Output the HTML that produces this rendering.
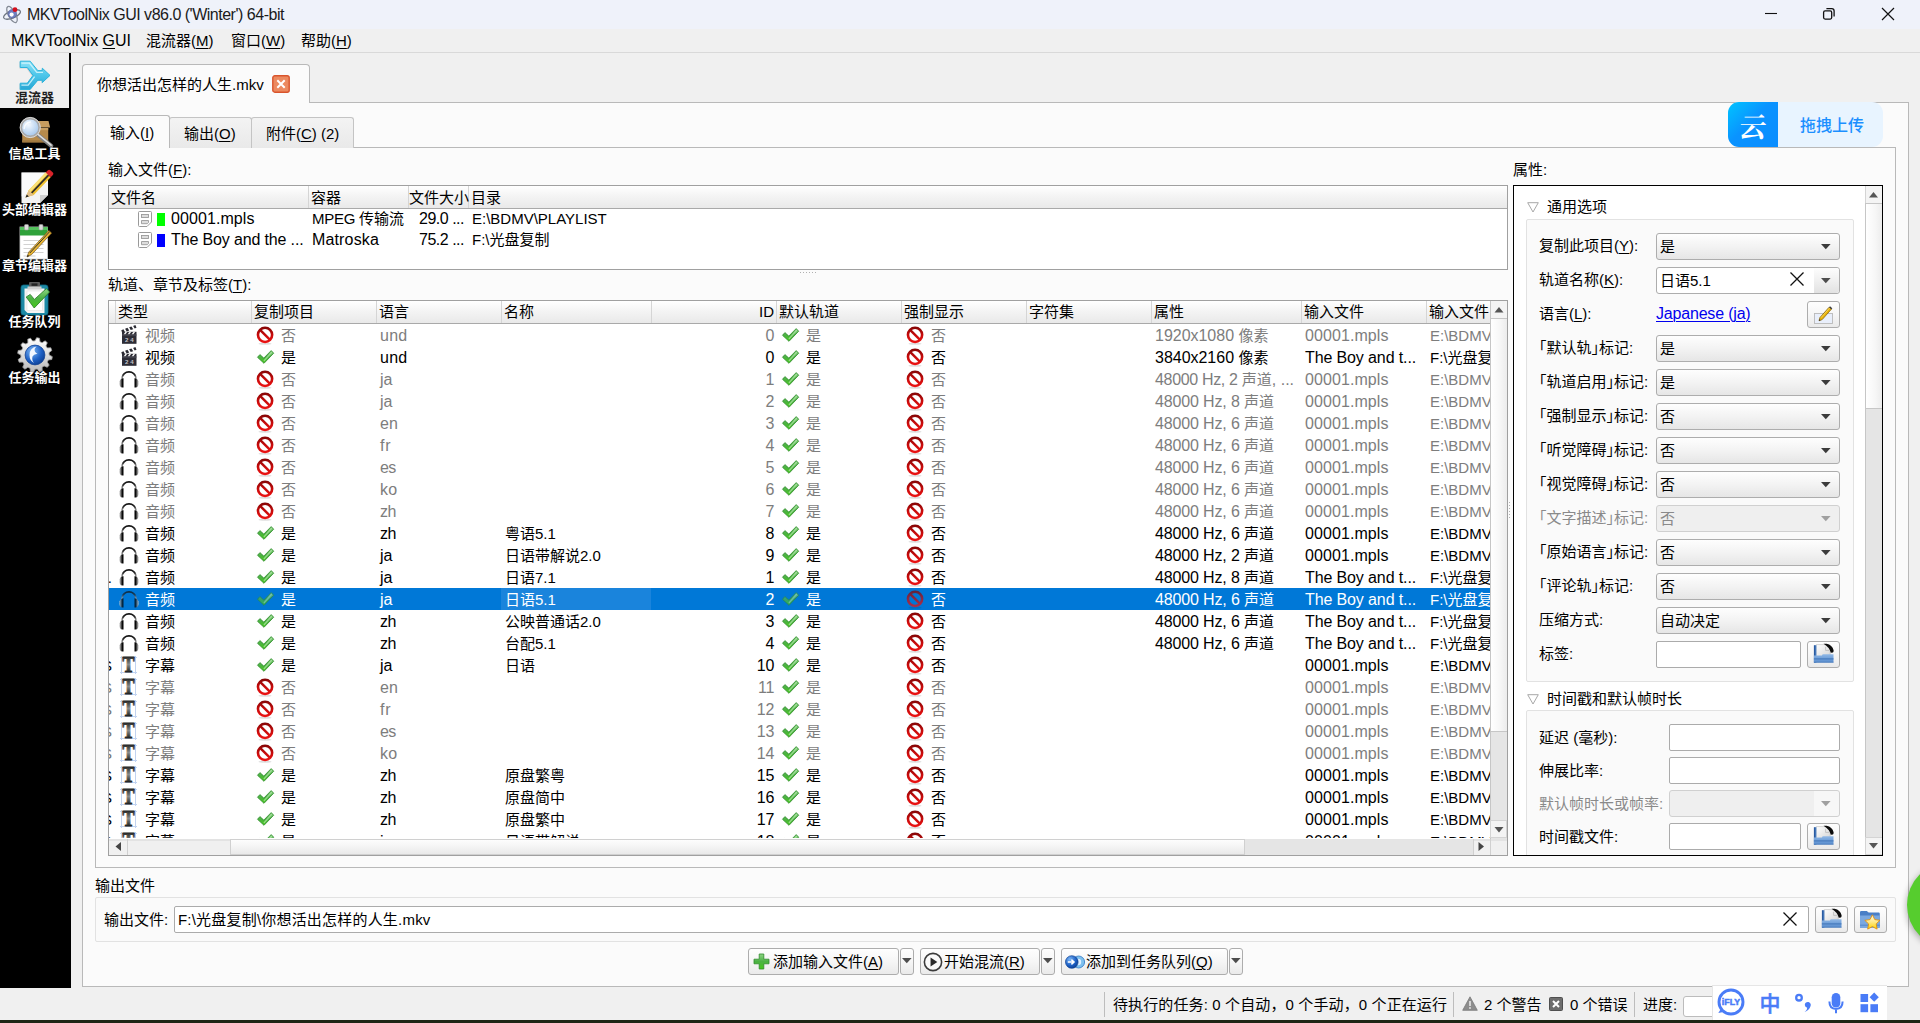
<!DOCTYPE html>
<html lang="zh-CN"><head><meta charset="utf-8"><title>MKVToolNix GUI</title>
<style>
*{box-sizing:border-box;margin:0;padding:0}
html,body{width:1920px;height:1023px;overflow:hidden}
body{position:relative;background:#f0f0f0;font:15px/20px "Liberation Sans","Noto Sans CJK SC",sans-serif;color:#000;-webkit-font-smoothing:antialiased}
.a{position:absolute}
.t{position:absolute;white-space:nowrap;height:20px;line-height:20px}
u{text-decoration:underline;text-underline-offset:2px;text-decoration-thickness:1px}
svg{position:absolute;overflow:visible}
#titlebar{left:0;top:0;width:1920px;height:29px;background:#eff2fa}
#menubar{left:0;top:29px;width:1920px;height:24px;background:#f0f0f0;border-bottom:1px solid #d9d9d9}
.menu{font-size:15px;letter-spacing:.45px;top:1px}
#side{left:0;top:53px;width:69px;height:935px;background:#000}
#sideline{left:69px;top:53px;width:2px;height:935px;background:#000}
.sitem{left:0;width:69px;height:56px;text-align:center}
.slabel{position:absolute;left:-10px;width:89px;text-align:center;top:36px;font-size:13px;font-weight:bold;color:#fff;line-height:18px;white-space:nowrap}
.pane{background:#fbfbfb;border:1px solid #b9b9b9}
.tab{border:1px solid #c4c4c4;border-bottom:none;border-radius:3px 3px 0 0;background:linear-gradient(#f3f3f3,#e9e9e9)}
.tab.sel{background:#fbfbfb;border-color:#b9b9b9}
.hdr{position:absolute;background:linear-gradient(#ffffff,#f4f4f4 45%,#e9e9e9);border-bottom:1px solid #a9a9a9}
.hsep{position:absolute;top:0;width:1px;height:100%;background:#d5d5d5}
.gray{color:#7d7d7d}
.row{position:absolute;left:0;height:22px;width:100%}
.row.sel{background:#0078d7;color:#fff}
.combo{position:absolute;height:27px;border:1px solid #adadad;border-radius:3px;background:linear-gradient(#fefefe,#f3f3f3 50%,#e6e6e6)}
.combo.dis{border-color:#d0d0d0;background:#efefef;color:#8a8a8a}
.edit{position:absolute;height:27px;border:1px solid #ababab;border-radius:2px;background:#fff}
.btn{position:absolute;border:1px solid #adadad;border-radius:3px;background:linear-gradient(#fefefe,#f6f6f6 50%,#eaeaea)}

.row.sel svg{opacity:.72}

</style></head>
<body>
<svg width="0" height="0" style="position:absolute">
<defs>
<linearGradient id="gGreen" x1="0" y1="0" x2="0" y2="1"><stop offset="0" stop-color="#8ed585"/><stop offset=".5" stop-color="#4cb244"/><stop offset="1" stop-color="#46c81a"/></linearGradient>
<linearGradient id="gRed" gradientUnits="userSpaceOnUse" x1="0" y1="0" x2="0" y2="17"><stop offset="0" stop-color="#7c0505"/><stop offset=".5" stop-color="#c40a0a"/><stop offset="1" stop-color="#ee1414"/></linearGradient>
<linearGradient id="gT" gradientUnits="userSpaceOnUse" x1="0" y1="0" x2="0" y2="13"><stop offset="0" stop-color="#1a1a1a"/><stop offset=".5" stop-color="#8a8a8a"/><stop offset="1" stop-color="#111"/></linearGradient>
<linearGradient id="gCyan" x1="0" y1="0" x2="0" y2="1"><stop offset="0" stop-color="#8fe3f7"/><stop offset=".5" stop-color="#4cc6ea"/><stop offset="1" stop-color="#2aa7d4"/></linearGradient>
<linearGradient id="gBlueTray" x1="0" y1="0" x2="0" y2="1"><stop offset="0" stop-color="#92b9e6"/><stop offset=".5" stop-color="#6f9fd9"/><stop offset="1" stop-color="#5a8dcd"/></linearGradient>
<linearGradient id="gStar" x1="0" y1="0" x2="0" y2="1"><stop offset="0" stop-color="#fffbe0"/><stop offset=".5" stop-color="#ffe98a"/><stop offset="1" stop-color="#ffd400"/></linearGradient>
<linearGradient id="gPage" x1="0" y1="0" x2="1" y2="1"><stop offset="0" stop-color="#ffffff"/><stop offset="1" stop-color="#d6d6d6"/></linearGradient>
<linearGradient id="gBar" x1="0" y1="0" x2="1" y2="0"><stop offset="0" stop-color="#1d4d94"/><stop offset="1" stop-color="#5a8ccc"/></linearGradient>
<linearGradient id="gBand" x1="0" y1="0" x2="0" y2="1"><stop offset="0" stop-color="#111"/><stop offset=".35" stop-color="#262626"/><stop offset=".7" stop-color="#8a8a8a"/><stop offset="1" stop-color="#d0d0d0"/></linearGradient>
<linearGradient id="gHPL" x1="0" y1="0" x2="1" y2="0"><stop offset="0" stop-color="#d8d8d8"/><stop offset=".4" stop-color="#6a6a6a"/><stop offset=".7" stop-color="#0a0a0a"/><stop offset="1" stop-color="#000"/></linearGradient>
<linearGradient id="gHPR" x1="1" y1="0" x2="0" y2="0"><stop offset="0" stop-color="#d8d8d8"/><stop offset=".4" stop-color="#6a6a6a"/><stop offset=".7" stop-color="#0a0a0a"/><stop offset="1" stop-color="#000"/></linearGradient>
<linearGradient id="gHP" x1="0" y1="0" x2="1" y2="0"><stop offset="0" stop-color="#111"/><stop offset=".5" stop-color="#999"/><stop offset="1" stop-color="#222"/></linearGradient>
<radialGradient id="gBall" cx=".35" cy=".3" r=".8"><stop offset="0" stop-color="#7db6f5"/><stop offset=".6" stop-color="#1c5fc4"/><stop offset="1" stop-color="#0b3a8a"/></radialGradient>
<radialGradient id="gLens" cx=".4" cy=".35" r=".7"><stop offset="0" stop-color="#f4f9ff"/><stop offset="1" stop-color="#9fc3ea"/></radialGradient>
<linearGradient id="gGear" x1="0" y1="0" x2="0" y2="1"><stop offset="0" stop-color="#ffffff"/><stop offset="1" stop-color="#b9b9b9"/></linearGradient>

</defs></svg>
<div id="titlebar" class="a"></div>
<svg class="a" style="left:2px;top:4px" width="20" height="20" viewBox="0 0 20 20">
<ellipse cx="10" cy="10.5" rx="9" ry="3.6" fill="none" stroke="#6d7480" stroke-width="1.3" transform="rotate(-22 10 10.5)"/>
<ellipse cx="10" cy="10.5" rx="9" ry="3.6" fill="none" stroke="#858b96" stroke-width="1.3" transform="rotate(62 10 10.5)"/>
<circle cx="10.3" cy="9.8" r="4.3" fill="#6f7fc0"/><circle cx="10.3" cy="9.8" r="4.3" fill="none" stroke="#55609a" stroke-width=".6"/>
<circle cx="9.6" cy="10.6" r="2.1" fill="#fff"/>
<circle cx="13" cy="5.7" r="2.4" fill="#d40f1c"/>
</svg>
<div class="t" style="left:27px;top:5px;font-size:16px;color:#1a1a1a;letter-spacing:-.49px">MKVToolNix GUI v86.0 ('Winter') 64-bit</div>
<svg class="a" style="left:1750px;top:0" width="170" height="29" viewBox="0 0 170 29">
<path d="M15 13.5 h12" stroke="#111" stroke-width="1.1"/>
<path d="M75.1 10.9 h5.1 q1.5 0 1.5 1.5 v5.2 q0 1.5 -1.5 1.5 h-5.1 q-1.5 0 -1.5 -1.5 v-5.2 q0 -1.5 1.5 -1.5 z M76.4 8.6 h5.4 q2.3 0 2.3 2.3 v5.6" fill="none" stroke="#111" stroke-width="1.3"/>
<path d="M132 8 l12 12 M144 8 l-12 12" stroke="#111" stroke-width="1.2"/>
</svg>
<div id="menubar" class="a"></div>
<div class="t menu" style="left:11px;top:31px;font-size:16px;letter-spacing:0">MKVToolNix <u>G</u>UI</div>
<div class="t menu" style="left:146px;top:31px;letter-spacing:0">混流器(<u>M</u>)</div>
<div class="t menu" style="left:231px;top:31px;letter-spacing:0">窗口(<u>W</u>)</div>
<div class="t menu" style="left:301px;top:31px;letter-spacing:0">帮助(<u>H</u>)</div>
<div id="side" class="a"></div><div id="sideline" class="a"></div>
<div class="a" style="left:0;top:53px;width:69px;height:55px;background:#f0f0f0"></div>
<svg class="a" style="left:19px;top:60px" width="33" height="31" viewBox="0 0 33 31">
<path d="M1.2 1.2 H11.2 L18.8 10.6 H23.3 V8.2 L31 15.4 L23.3 22.6 V20.2 H18.8 L11.2 29.4 H1.2 V23.2 H8.3 L14 15.4 L8.3 7.5 H1.2 Z" transform="translate(-.8 .9)" fill="#9a9a9a" opacity=".35"/>
<path d="M1.2 1.2 H11.2 L18.8 10.6 H23.3 V8.2 L31 15.4 L23.3 22.6 V20.2 H18.8 L11.2 29.4 H1.2 V23.2 H8.3 L14 15.4 L8.3 7.5 H1.2 Z" fill="url(#gCyan)" stroke="#2ab4dd" stroke-width="1" stroke-linejoin="round"/>
<path d="M2.4 3.2 H10.4 L17.8 12.400000000000001 H24 M2.4 25.2 H9.2 L15.6 16.6" fill="none" stroke="#d9f7fd" stroke-width="1.3" opacity=".85"/></svg>
<div class="a sitem" style="top:53px"><div class="slabel" style="color:#1f1f1f">混流器</div></div>
<svg class="a" style="left:19px;top:116px" width="36" height="34" viewBox="0 0 36 34">
<path d="M3.2 12 h26.000000000000004 v14.4 h-26 z" fill="#b58a4c"/><path d="M19 5 h10.500000000000002 l1.6 6.500000000000001 h-12.100000000000001 z" fill="#c79d5f"/><path d="M3.2 12 h26 v2.2 h-26 z" fill="#c9a063"/><path d="M3.2 24.2 h26 v2.2 h-26 z" fill="#a27a40"/>
<path d="M18.500000000000004 18.5 l13.8 11.400000000000002" stroke="#808080" stroke-width="4" stroke-linecap="round"/><path d="M18.7 18.1 l13.400000000000002 11.100000000000001" stroke="#dedede" stroke-width="1.5" stroke-linecap="round"/>
<circle cx="11.2" cy="11.5" r="9.2" fill="url(#gLens)" stroke="#a9a9a9" stroke-width="2.2"/><circle cx="11.2" cy="11.5" r="10.100000000000001" fill="none" stroke="#e2e2e2" stroke-width=".9"/><path d="M5.2 12.5 q.5 -5.500000000000001 6 -6.500000000000001" fill="none" stroke="#fff" stroke-width="1.6" opacity=".8" stroke-linecap="round"/></svg>
<div class="a sitem" style="top:109px"><div class="slabel" style="color:#fff">信息工具</div></div>
<svg class="a" style="left:20px;top:169px" width="34" height="35" viewBox="0 0 34 35">
<path d="M1.5 3.5 h26.500000000000004 v22.5 l-8 8 h-18.5 z" fill="#f3f3f3"/><path d="M28 26 h-8 v8 z" fill="#d0d0d0"/><path d="M1.5 3.5 h26.5 v10 l-26.500000000000004 14 z" fill="#fff" opacity=".6"/>
<path d="M5.5 28.5 l3.2 -7.200000000000001 17 -17.8 5 4.8 -17 17.8 z" fill="#f0c12e"/><path d="M8.7 21.3 l17 -17.8 1.700000000000001 1.600000000000001 -17 17.8 z" fill="#fbe27a"/><path d="M10.900000000000002 23.4 l17 -17.8 1.3 1.200000000000001 -17 17.8 z" fill="#2d2d2d"/>
<path d="M25.7 3.5 l2.200000000000001 -2.300000000000001 q1.2 -1 2.5 0 l2.500000000000001 2.400000000000001 q1 1.3 0 2.500000000000001 l-2.200000000000001 2.200000000000001 z" fill="#d8232a"/>
<path d="M5.5 28.5 l3.2 -7.2 5 4.800000000000001 z" fill="#e2c08a"/><path d="M5.5 28.5 l1.3 -3 2 1.9 z" fill="#222"/></svg>
<div class="a sitem" style="top:165px"><div class="slabel" style="color:#fff">头部编辑器</div></div>
<svg class="a" style="left:19px;top:224px" width="34" height="36" viewBox="0 0 34 36">
<rect x="1" y="3" width="27.500000000000004" height="32" fill="#fff" stroke="#cfcfcf" stroke-width=".8"/><rect x="1" y="3" width="27.5" height="8.5" fill="#2fa23a"/><rect x="1" y="3" width="27.5" height="3" fill="#55c25e"/>
<rect x="5.5" y="0.5" width="4" height="5.5" rx="1" fill="#dcdcdc" stroke="#9a9a9a" stroke-width=".6"/><rect x="20" y="0.5" width="4" height="5.5" rx="1" fill="#dcdcdc" stroke="#9a9a9a" stroke-width=".6"/>
<path d="M4.5 16.5 h20 M4.5 20.5 h20 M4.5 24.500000000000004 h20 M4.5 28.500000000000004 h20 M4.5 32 h12" stroke="#d2d2d2" stroke-width="1.2"/>
<path d="M8 33 l1.800000000000001 -5.000000000000001 20 -21.5 2.800000000000001 2.600000000000001 -20 21.5 z" fill="#e9b531" stroke="#77551b" stroke-width=".7"/><path d="M10.8 29 l20 -21.5" stroke="#333" stroke-width="1"/><path d="M8 33 l.8 -2.2 1.3 1.200000000000001 z" fill="#222"/></svg>
<div class="a sitem" style="top:221px"><div class="slabel" style="color:#fff">章节编辑器</div></div>
<svg class="a" style="left:20px;top:281px" width="32" height="35" viewBox="0 0 32 35">
<rect x="1" y="4" width="27" height="30" rx="2.500000000000001" fill="#1d8aa6"/><rect x="1" y="4" width="27" height="30" rx="2.5" fill="none" stroke="#0f6a84" stroke-width=".8"/>
<path d="M4.5 7.5 h20 v24.5 h-17 l-3 -3 z" fill="#f4f4f4"/><path d="M7 10 h15.500000000000002 v19.5 h-15.5 z" fill="#fff" stroke="#e0e0e0" stroke-width=".6"/>
<rect x="9" y="1" width="11" height="6.5" rx="1" fill="#5a5a5a"/><rect x="11.5" y="2.4" width="6" height="2.4" fill="#222"/><rect x="7.5" y="5.5" width="14" height="3" fill="#cfcfcf"/>
<path d="M6.2 16 l4 -2.600000000000001 4.2 5.000000000000001 12.000000000000002 -10.8 3.200000000000001 3.400000000000001 -15.4 16 z" fill="url(#gGreen)" stroke="#237a22" stroke-width=".8" stroke-linejoin="round"/></svg>
<div class="a sitem" style="top:277px"><div class="slabel" style="color:#fff">任务队列</div></div>
<svg class="a" style="left:17px;top:337px" width="36" height="36" viewBox="0 0 36 36">
<path d="M32.20 18.00 L35.32 19.64 L34.81 22.50 L31.31 22.95 L30.30 25.10 L32.18 28.08 L30.30 30.30 L27.05 28.94 L25.10 30.30 L25.24 33.82 L22.50 34.81 L20.37 32.00 L18.00 32.20 L16.36 35.32 L13.50 34.81 L13.05 31.31 L10.90 30.30 L7.92 32.18 L5.70 30.30 L7.06 27.05 L5.70 25.10 L2.18 25.24 L1.19 22.50 L4.00 20.37 L3.80 18.00 L0.68 16.36 L1.19 13.50 L4.69 13.05 L5.70 10.90 L3.82 7.92 L5.70 5.70 L8.95 7.06 L10.90 5.70 L10.76 2.18 L13.50 1.19 L15.63 4.00 L18.00 3.80 L19.64 0.68 L22.50 1.19 L22.95 4.69 L25.10 5.70 L28.08 3.82 L30.30 5.70 L28.94 8.95 L30.30 10.90 L33.82 10.76 L34.81 13.50 L32.00 15.63 Z" fill="url(#gGear)" stroke="#9c9c9c" stroke-width=".8" stroke-linejoin="round"/>
<circle cx="18" cy="18" r="9.9" fill="url(#gBall)" stroke="#0e3f93" stroke-width=".8"/>
<path d="M19.5 9.5 q-7 1.5 -7 8.5 q0 5.500000000000001 4.500000000000001 8 q-2.500000000000001 -2.800000000000001 -1.500000000000001 -6.500000000000001 q1.500000000000001 -3.000000000000001 5.000000000000001 -2.500000000000001 q-3.000000000000001 -1.500000000000001 -3.000000000000001 -4 q0 -2.000000000000001 2.000000000000001 -3.5 z" fill="#f2f7ff"/></svg>
<div class="a sitem" style="top:333px"><div class="slabel" style="color:#fff">任务输出</div></div>
<div class="a pane" style="left:82px;top:102px;width:1827px;height:885px"></div>
<div class="a tab sel" style="left:82px;top:64px;width:228px;height:39px;border-radius:4px 4px 0 0"></div>
<div class="t" style="left:97px;top:75px">你想活出怎样的人生.mkv</div>
<svg class="a" style="left:272px;top:75px" width="18" height="18" viewBox="0 0 18 18"><rect x=".8" y=".8" width="16.4" height="16.4" rx="2" fill="#ec8a60" stroke="#d9542c" stroke-width="1.4"/><path d="M5.3 5.3 l7.4 7.4 M12.7 5.3 l-7.4 7.4" stroke="#fff" stroke-width="2"/></svg>
<div class="a pane" style="left:95px;top:147px;width:1801px;height:721px"></div>
<div class="a tab" style="left:169px;top:117px;width:83px;height:31px"></div>
<div class="a tab" style="left:251px;top:117px;width:103px;height:31px"></div>
<div class="a tab sel" style="left:95px;top:115px;width:75px;height:33px"></div>
<div class="t" style="left:110px;top:123px">输入(<u>I</u>)</div>
<div class="t" style="left:184px;top:124px">输出(<u>O</u>)</div>
<div class="t" style="left:266px;top:124px">附件(<u>C</u>) (2)</div>
<div class="a" style="left:1728px;top:102px;width:155px;height:45px;border-radius:11px;background:#e8f4ff;overflow:hidden"><div class="a" style="left:0;top:0;width:50px;height:45px;background:linear-gradient(135deg,#00c4ff 0%,#0a93ff 45%,#0a8dff 100%)"></div><div class="t" style="left:9px;top:8px;width:32px;height:32px;line-height:32px;text-align:center;transform:skewX(-8deg);font:bold 27px/32px 'Noto Serif CJK SC','Noto Sans CJK SC',serif;color:#fff">云</div><div class="t" style="left:72px;top:14px;font-size:16px;font-weight:500;color:#1b8fff">拖拽上传</div></div>
<div class="t" style="left:108px;top:160px">输入文件(<u>F</u>):</div>
<div class="t" style="left:108px;top:275px">轨道、章节及标签(<u>T</u>):</div>
<div class="t" style="left:1513px;top:160px">属性:</div>
<div class="a" style="left:108px;top:185px;width:1400px;height:85px;background:#fff;border:1px solid #a0a0a0"></div>
<div class="hdr" style="left:109px;top:186px;width:1398px;height:23px"><div class="hsep" style="left:199px"></div><div class="hsep" style="left:299px"></div><div class="hsep" style="left:359px"></div></div>
<div class="t" style="left:111px;top:188px">文件名</div>
<div class="t" style="left:311px;top:188px">容器</div>
<div class="t" style="left:409px;top:188px">文件大小</div>
<div class="t" style="left:471px;top:188px">目录</div>
<svg class="a" style="left:138px;top:211px" width="14" height="16" viewBox="0 0 14 16" ><path d="M1.5 .5 h11 q1 0 1 1 v9.5 l-4.5 4.5 h-7.5 q-1 0 -1 -1 v-13 q0 -1 1 -1 z" fill="#fff" stroke="#9a9a9a" stroke-width="1"/><rect x="3.5" y="3.5" width="7" height="3" fill="#ddd" stroke="#9a9a9a" stroke-width=".9"/><path d="M3.5 9.5 h7 v2 l-1.2 1.2 h-5.8 z" fill="#ddd" stroke="#9a9a9a" stroke-width=".9"/></svg>
<div class="a" style="left:157px;top:213px;width:8px;height:13px;background:#00ff00"></div>
<div class="t" style="left:171px;top:209px"><span style="font-size:16px;letter-spacing:0.08px">00001.mpls</span></div>
<div class="t" style="left:312px;top:209px"><span style="letter-spacing:-0.27px">MPEG </span>传输流</div>
<div class="t" style="left:419px;top:209px"><span style="font-size:16px;letter-spacing:-0.49px">29.0 ...</span></div>
<div class="t" style="left:472px;top:209px">E:\BDMV\PLAYLIST</div>
<svg class="a" style="left:138px;top:232px" width="14" height="16" viewBox="0 0 14 16" ><path d="M1.5 .5 h11 q1 0 1 1 v9.5 l-4.5 4.5 h-7.5 q-1 0 -1 -1 v-13 q0 -1 1 -1 z" fill="#fff" stroke="#9a9a9a" stroke-width="1"/><rect x="3.5" y="3.5" width="7" height="3" fill="#ddd" stroke="#9a9a9a" stroke-width=".9"/><path d="M3.5 9.5 h7 v2 l-1.2 1.2 h-5.8 z" fill="#ddd" stroke="#9a9a9a" stroke-width=".9"/></svg>
<div class="a" style="left:157px;top:234px;width:8px;height:13px;background:#0000ff"></div>
<div class="t" style="left:171px;top:230px"><span style="font-size:16px;letter-spacing:-0.14px">The Boy and the ...</span></div>
<div class="t" style="left:312px;top:230px"><span style="font-size:16px;letter-spacing:0.15px">Matroska</span></div>
<div class="t" style="left:419px;top:230px"><span style="font-size:16px;letter-spacing:-0.49px">75.2 ...</span></div>
<div class="t" style="left:472px;top:230px">F:\光盘复制</div>
<div class="a" style="left:800px;top:272px;width:18px;height:1px;background:repeating-linear-gradient(90deg,#b0b0b0 0 1px,transparent 1px 3px)"></div>
<div class="a" style="left:108px;top:300px;width:1400px;height:556px;background:#fff;border:1px solid #a0a0a0"></div>
<div class="a" id="tbody" style="left:109px;top:323px;width:1382px;height:515px;overflow:hidden">
<div class="row gray" style="top:1px"><svg class="a" style="left:12px;top:1px" width="16" height="19" viewBox="0 0 16 19" ><g fill="#2a2a32"><path d="M0.3 5.3 L2.5 4.3 L4 7.2 L1.3 8.2 Z"/><path d="M4.1 3.7 L6.5 2.8 L8.2 5.6 L5.7 6.5Z"/><path d="M8.1 2.3 L10.5 1.4 L12.2 4.2 L9.7 5.1Z"/><path d="M12.1 0.9 L14.4 0.1 L15.5 2.8 L13.7 3.6Z"/></g><rect x="1" y="6.8" width="14.5" height="12" fill="#2d2d36"/><path d="M2.6 9.4 L4.4 6.8 H6.2 L4.4 9.4Z M6.6 9.4 L8.4 6.8 H10.2 L8.4 9.4Z M10.6 9.4 L12.4 6.8 H14.2 L12.4 9.4Z" fill="#f2f2f2"/><rect x="1" y="9.4" width="14.5" height="1.2" fill="#4c4c57"/><text x="8.3" y="16.9" font-size="6.2" font-weight="bold" fill="#c2c2c9" text-anchor="middle" font-family="Liberation Sans, sans-serif">2 4</text></svg><div class="t" style="left:36px;top:2px">视频</div><svg class="a" style="left:147px;top:2px" width="18" height="19" viewBox="0 0 18 19" ><ellipse cx="9" cy="17.8" rx="6.5" ry="1" fill="#000" opacity=".13"/><circle cx="9.05" cy="8.85" r="7.1" fill="none" stroke="url(#gRed)" stroke-width="2.6"/><path d="M4.3 4.1 L13.8 13.6" stroke="url(#gRed)" stroke-width="2.5"/></svg><div class="t" style="left:172px;top:2px">否</div><div class="t" style="left:271px;top:2px"><span style="font-size:16px;letter-spacing:0.27px">und</span></div><div class="t" style="left:591px;width:74px;text-align:right;top:2px;font-size:16px;letter-spacing:-.3px">0</div><svg class="a" style="left:672.5px;top:4px" width="17" height="14" viewBox="0 0 17 14" ><path d="M0.5 7.3 L2.9 4.6 L6.8 8.1 L14.2 0.6 L16.7 3.2 L7 13.3 Z" fill="url(#gGreen)" stroke="#2f8a2c" stroke-width=".8" stroke-linejoin="round"/><path d="M7.2 10.6 L14.4 2.6" stroke="#b4e6ac" stroke-width="1.3" stroke-linecap="round" opacity=".75"/></svg><div class="t" style="left:697px;top:2px">是</div><svg class="a" style="left:796.7px;top:2px" width="18" height="19" viewBox="0 0 18 19" ><ellipse cx="9" cy="17.8" rx="6.5" ry="1" fill="#000" opacity=".13"/><circle cx="9.05" cy="8.85" r="7.1" fill="none" stroke="url(#gRed)" stroke-width="2.6"/><path d="M4.3 4.1 L13.8 13.6" stroke="url(#gRed)" stroke-width="2.5"/></svg><div class="t" style="left:822px;top:2px">否</div><div class="t" style="left:1046px;top:2px"><span style="font-size:16px;letter-spacing:-0.02px">1920x1080 </span>像素</div><div class="t" style="left:1196px;top:2px"><span style="font-size:16px;letter-spacing:0.08px">00001.mpls</span></div><div class="t" style="left:1321px;top:2px">E:\BDMV\PLAYLIST</div></div>
<div class="row" style="top:23px"><svg class="a" style="left:12px;top:1px" width="16" height="19" viewBox="0 0 16 19" ><g fill="#2a2a32"><path d="M0.3 5.3 L2.5 4.3 L4 7.2 L1.3 8.2 Z"/><path d="M4.1 3.7 L6.5 2.8 L8.2 5.6 L5.7 6.5Z"/><path d="M8.1 2.3 L10.5 1.4 L12.2 4.2 L9.7 5.1Z"/><path d="M12.1 0.9 L14.4 0.1 L15.5 2.8 L13.7 3.6Z"/></g><rect x="1" y="6.8" width="14.5" height="12" fill="#2d2d36"/><path d="M2.6 9.4 L4.4 6.8 H6.2 L4.4 9.4Z M6.6 9.4 L8.4 6.8 H10.2 L8.4 9.4Z M10.6 9.4 L12.4 6.8 H14.2 L12.4 9.4Z" fill="#f2f2f2"/><rect x="1" y="9.4" width="14.5" height="1.2" fill="#4c4c57"/><text x="8.3" y="16.9" font-size="6.2" font-weight="bold" fill="#c2c2c9" text-anchor="middle" font-family="Liberation Sans, sans-serif">2 4</text></svg><div class="t" style="left:36px;top:2px">视频</div><svg class="a" style="left:147.5px;top:4px" width="17" height="14" viewBox="0 0 17 14" ><path d="M0.5 7.3 L2.9 4.6 L6.8 8.1 L14.2 0.6 L16.7 3.2 L7 13.3 Z" fill="url(#gGreen)" stroke="#2f8a2c" stroke-width=".8" stroke-linejoin="round"/><path d="M7.2 10.6 L14.4 2.6" stroke="#b4e6ac" stroke-width="1.3" stroke-linecap="round" opacity=".75"/></svg><div class="t" style="left:172px;top:2px">是</div><div class="t" style="left:271px;top:2px"><span style="font-size:16px;letter-spacing:0.27px">und</span></div><div class="t" style="left:591px;width:74px;text-align:right;top:2px;font-size:16px;letter-spacing:-.3px">0</div><svg class="a" style="left:672.5px;top:4px" width="17" height="14" viewBox="0 0 17 14" ><path d="M0.5 7.3 L2.9 4.6 L6.8 8.1 L14.2 0.6 L16.7 3.2 L7 13.3 Z" fill="url(#gGreen)" stroke="#2f8a2c" stroke-width=".8" stroke-linejoin="round"/><path d="M7.2 10.6 L14.4 2.6" stroke="#b4e6ac" stroke-width="1.3" stroke-linecap="round" opacity=".75"/></svg><div class="t" style="left:697px;top:2px">是</div><svg class="a" style="left:796.7px;top:2px" width="18" height="19" viewBox="0 0 18 19" ><ellipse cx="9" cy="17.8" rx="6.5" ry="1" fill="#000" opacity=".13"/><circle cx="9.05" cy="8.85" r="7.1" fill="none" stroke="url(#gRed)" stroke-width="2.6"/><path d="M4.3 4.1 L13.8 13.6" stroke="url(#gRed)" stroke-width="2.5"/></svg><div class="t" style="left:822px;top:2px">否</div><div class="t" style="left:1046px;top:2px"><span style="font-size:16px;letter-spacing:-0.02px">3840x2160 </span>像素</div><div class="t" style="left:1196px;top:2px"><span style="font-size:16px;letter-spacing:-0.12px">The Boy and t...</span></div><div class="t" style="left:1321px;top:2px">F:\光盘复制</div></div>
<div class="row gray" style="top:45px"><svg class="a" style="left:10px;top:3px" width="20" height="17" viewBox="0 0 20 17" ><path d="M3.1 8.8 C2.8 2.6 7 0.9 10 0.9 C13 0.9 17.2 2.6 16.9 8.8" fill="none" stroke="url(#gBand)" stroke-width="1.7"/><path d="M0.5 10.2 Q1.6 7 4.5 7.3 L4.5 16.5 Q2 17 0.9 15 Q-0.1 12.6 0.5 10.2Z" fill="url(#gHPL)"/><path d="M19.5 10.2 Q18.4 7 15.5 7.3 L15.5 16.5 Q18 17 19.1 15 Q20.1 12.6 19.500000000000004 10.2Z" fill="url(#gHPR)"/></svg><div class="t" style="left:36px;top:2px">音频</div><svg class="a" style="left:147px;top:2px" width="18" height="19" viewBox="0 0 18 19" ><ellipse cx="9" cy="17.8" rx="6.5" ry="1" fill="#000" opacity=".13"/><circle cx="9.05" cy="8.85" r="7.1" fill="none" stroke="url(#gRed)" stroke-width="2.6"/><path d="M4.3 4.1 L13.8 13.6" stroke="url(#gRed)" stroke-width="2.5"/></svg><div class="t" style="left:172px;top:2px">否</div><div class="t" style="left:271px;top:2px"><span style="font-size:16px;letter-spacing:-0.12px">ja</span></div><div class="t" style="left:591px;width:74px;text-align:right;top:2px;font-size:16px;letter-spacing:-.3px">1</div><svg class="a" style="left:672.5px;top:4px" width="17" height="14" viewBox="0 0 17 14" ><path d="M0.5 7.3 L2.9 4.6 L6.8 8.1 L14.2 0.6 L16.7 3.2 L7 13.3 Z" fill="url(#gGreen)" stroke="#2f8a2c" stroke-width=".8" stroke-linejoin="round"/><path d="M7.2 10.6 L14.4 2.6" stroke="#b4e6ac" stroke-width="1.3" stroke-linecap="round" opacity=".75"/></svg><div class="t" style="left:697px;top:2px">是</div><svg class="a" style="left:796.7px;top:2px" width="18" height="19" viewBox="0 0 18 19" ><ellipse cx="9" cy="17.8" rx="6.5" ry="1" fill="#000" opacity=".13"/><circle cx="9.05" cy="8.85" r="7.1" fill="none" stroke="url(#gRed)" stroke-width="2.6"/><path d="M4.3 4.1 L13.8 13.6" stroke="url(#gRed)" stroke-width="2.5"/></svg><div class="t" style="left:822px;top:2px">否</div><div class="t" style="left:1046px;top:2px"><span style="font-size:16px;letter-spacing:-0.33px">48000 Hz, 2 </span>声道<span style="font-size:16px">, ...</span></div><div class="t" style="left:1196px;top:2px"><span style="font-size:16px;letter-spacing:0.08px">00001.mpls</span></div><div class="t" style="left:1321px;top:2px">E:\BDMV\PLAYLIST</div></div>
<div class="row gray" style="top:67px"><svg class="a" style="left:10px;top:3px" width="20" height="17" viewBox="0 0 20 17" ><path d="M3.1 8.8 C2.8 2.6 7 0.9 10 0.9 C13 0.9 17.2 2.6 16.9 8.8" fill="none" stroke="url(#gBand)" stroke-width="1.7"/><path d="M0.5 10.2 Q1.6 7 4.5 7.3 L4.5 16.5 Q2 17 0.9 15 Q-0.1 12.6 0.5 10.2Z" fill="url(#gHPL)"/><path d="M19.5 10.2 Q18.4 7 15.5 7.3 L15.5 16.5 Q18 17 19.1 15 Q20.1 12.6 19.500000000000004 10.2Z" fill="url(#gHPR)"/></svg><div class="t" style="left:36px;top:2px">音频</div><svg class="a" style="left:147px;top:2px" width="18" height="19" viewBox="0 0 18 19" ><ellipse cx="9" cy="17.8" rx="6.5" ry="1" fill="#000" opacity=".13"/><circle cx="9.05" cy="8.85" r="7.1" fill="none" stroke="url(#gRed)" stroke-width="2.6"/><path d="M4.3 4.1 L13.8 13.6" stroke="url(#gRed)" stroke-width="2.5"/></svg><div class="t" style="left:172px;top:2px">否</div><div class="t" style="left:271px;top:2px"><span style="font-size:16px;letter-spacing:-0.12px">ja</span></div><div class="t" style="left:591px;width:74px;text-align:right;top:2px;font-size:16px;letter-spacing:-.3px">2</div><svg class="a" style="left:672.5px;top:4px" width="17" height="14" viewBox="0 0 17 14" ><path d="M0.5 7.3 L2.9 4.6 L6.8 8.1 L14.2 0.6 L16.7 3.2 L7 13.3 Z" fill="url(#gGreen)" stroke="#2f8a2c" stroke-width=".8" stroke-linejoin="round"/><path d="M7.2 10.6 L14.4 2.6" stroke="#b4e6ac" stroke-width="1.3" stroke-linecap="round" opacity=".75"/></svg><div class="t" style="left:697px;top:2px">是</div><svg class="a" style="left:796.7px;top:2px" width="18" height="19" viewBox="0 0 18 19" ><ellipse cx="9" cy="17.8" rx="6.5" ry="1" fill="#000" opacity=".13"/><circle cx="9.05" cy="8.85" r="7.1" fill="none" stroke="url(#gRed)" stroke-width="2.6"/><path d="M4.3 4.1 L13.8 13.6" stroke="url(#gRed)" stroke-width="2.5"/></svg><div class="t" style="left:822px;top:2px">否</div><div class="t" style="left:1046px;top:2px"><span style="font-size:16px;letter-spacing:-0.15px">48000 Hz, 8 </span>声道</div><div class="t" style="left:1196px;top:2px"><span style="font-size:16px;letter-spacing:0.08px">00001.mpls</span></div><div class="t" style="left:1321px;top:2px">E:\BDMV\PLAYLIST</div></div>
<div class="row gray" style="top:89px"><svg class="a" style="left:10px;top:3px" width="20" height="17" viewBox="0 0 20 17" ><path d="M3.1 8.8 C2.8 2.6 7 0.9 10 0.9 C13 0.9 17.2 2.6 16.9 8.8" fill="none" stroke="url(#gBand)" stroke-width="1.7"/><path d="M0.5 10.2 Q1.6 7 4.5 7.3 L4.5 16.5 Q2 17 0.9 15 Q-0.1 12.6 0.5 10.2Z" fill="url(#gHPL)"/><path d="M19.5 10.2 Q18.4 7 15.5 7.3 L15.5 16.5 Q18 17 19.1 15 Q20.1 12.6 19.500000000000004 10.2Z" fill="url(#gHPR)"/></svg><div class="t" style="left:36px;top:2px">音频</div><svg class="a" style="left:147px;top:2px" width="18" height="19" viewBox="0 0 18 19" ><ellipse cx="9" cy="17.8" rx="6.5" ry="1" fill="#000" opacity=".13"/><circle cx="9.05" cy="8.85" r="7.1" fill="none" stroke="url(#gRed)" stroke-width="2.6"/><path d="M4.3 4.1 L13.8 13.6" stroke="url(#gRed)" stroke-width="2.5"/></svg><div class="t" style="left:172px;top:2px">否</div><div class="t" style="left:271px;top:2px"><span style="font-size:16px;letter-spacing:0.00px">en</span></div><div class="t" style="left:591px;width:74px;text-align:right;top:2px;font-size:16px;letter-spacing:-.3px">3</div><svg class="a" style="left:672.5px;top:4px" width="17" height="14" viewBox="0 0 17 14" ><path d="M0.5 7.3 L2.9 4.6 L6.8 8.1 L14.2 0.6 L16.7 3.2 L7 13.3 Z" fill="url(#gGreen)" stroke="#2f8a2c" stroke-width=".8" stroke-linejoin="round"/><path d="M7.2 10.6 L14.4 2.6" stroke="#b4e6ac" stroke-width="1.3" stroke-linecap="round" opacity=".75"/></svg><div class="t" style="left:697px;top:2px">是</div><svg class="a" style="left:796.7px;top:2px" width="18" height="19" viewBox="0 0 18 19" ><ellipse cx="9" cy="17.8" rx="6.5" ry="1" fill="#000" opacity=".13"/><circle cx="9.05" cy="8.85" r="7.1" fill="none" stroke="url(#gRed)" stroke-width="2.6"/><path d="M4.3 4.1 L13.8 13.6" stroke="url(#gRed)" stroke-width="2.5"/></svg><div class="t" style="left:822px;top:2px">否</div><div class="t" style="left:1046px;top:2px"><span style="font-size:16px;letter-spacing:-0.15px">48000 Hz, 6 </span>声道</div><div class="t" style="left:1196px;top:2px"><span style="font-size:16px;letter-spacing:0.08px">00001.mpls</span></div><div class="t" style="left:1321px;top:2px">E:\BDMV\PLAYLIST</div></div>
<div class="row gray" style="top:111px"><svg class="a" style="left:10px;top:3px" width="20" height="17" viewBox="0 0 20 17" ><path d="M3.1 8.8 C2.8 2.6 7 0.9 10 0.9 C13 0.9 17.2 2.6 16.9 8.8" fill="none" stroke="url(#gBand)" stroke-width="1.7"/><path d="M0.5 10.2 Q1.6 7 4.5 7.3 L4.5 16.5 Q2 17 0.9 15 Q-0.1 12.6 0.5 10.2Z" fill="url(#gHPL)"/><path d="M19.5 10.2 Q18.4 7 15.5 7.3 L15.5 16.5 Q18 17 19.1 15 Q20.1 12.6 19.500000000000004 10.2Z" fill="url(#gHPR)"/></svg><div class="t" style="left:36px;top:2px">音频</div><svg class="a" style="left:147px;top:2px" width="18" height="19" viewBox="0 0 18 19" ><ellipse cx="9" cy="17.8" rx="6.5" ry="1" fill="#000" opacity=".13"/><circle cx="9.05" cy="8.85" r="7.1" fill="none" stroke="url(#gRed)" stroke-width="2.6"/><path d="M4.3 4.1 L13.8 13.6" stroke="url(#gRed)" stroke-width="2.5"/></svg><div class="t" style="left:172px;top:2px">否</div><div class="t" style="left:271px;top:2px"><span style="font-size:16px;letter-spacing:0.71px">fr</span></div><div class="t" style="left:591px;width:74px;text-align:right;top:2px;font-size:16px;letter-spacing:-.3px">4</div><svg class="a" style="left:672.5px;top:4px" width="17" height="14" viewBox="0 0 17 14" ><path d="M0.5 7.3 L2.9 4.6 L6.8 8.1 L14.2 0.6 L16.7 3.2 L7 13.3 Z" fill="url(#gGreen)" stroke="#2f8a2c" stroke-width=".8" stroke-linejoin="round"/><path d="M7.2 10.6 L14.4 2.6" stroke="#b4e6ac" stroke-width="1.3" stroke-linecap="round" opacity=".75"/></svg><div class="t" style="left:697px;top:2px">是</div><svg class="a" style="left:796.7px;top:2px" width="18" height="19" viewBox="0 0 18 19" ><ellipse cx="9" cy="17.8" rx="6.5" ry="1" fill="#000" opacity=".13"/><circle cx="9.05" cy="8.85" r="7.1" fill="none" stroke="url(#gRed)" stroke-width="2.6"/><path d="M4.3 4.1 L13.8 13.6" stroke="url(#gRed)" stroke-width="2.5"/></svg><div class="t" style="left:822px;top:2px">否</div><div class="t" style="left:1046px;top:2px"><span style="font-size:16px;letter-spacing:-0.15px">48000 Hz, 6 </span>声道</div><div class="t" style="left:1196px;top:2px"><span style="font-size:16px;letter-spacing:0.08px">00001.mpls</span></div><div class="t" style="left:1321px;top:2px">E:\BDMV\PLAYLIST</div></div>
<div class="row gray" style="top:133px"><svg class="a" style="left:10px;top:3px" width="20" height="17" viewBox="0 0 20 17" ><path d="M3.1 8.8 C2.8 2.6 7 0.9 10 0.9 C13 0.9 17.2 2.6 16.9 8.8" fill="none" stroke="url(#gBand)" stroke-width="1.7"/><path d="M0.5 10.2 Q1.6 7 4.5 7.3 L4.5 16.5 Q2 17 0.9 15 Q-0.1 12.6 0.5 10.2Z" fill="url(#gHPL)"/><path d="M19.5 10.2 Q18.4 7 15.5 7.3 L15.5 16.5 Q18 17 19.1 15 Q20.1 12.6 19.500000000000004 10.2Z" fill="url(#gHPR)"/></svg><div class="t" style="left:36px;top:2px">音频</div><svg class="a" style="left:147px;top:2px" width="18" height="19" viewBox="0 0 18 19" ><ellipse cx="9" cy="17.8" rx="6.5" ry="1" fill="#000" opacity=".13"/><circle cx="9.05" cy="8.85" r="7.1" fill="none" stroke="url(#gRed)" stroke-width="2.6"/><path d="M4.3 4.1 L13.8 13.6" stroke="url(#gRed)" stroke-width="2.5"/></svg><div class="t" style="left:172px;top:2px">否</div><div class="t" style="left:271px;top:2px"><span style="font-size:16px;letter-spacing:-0.70px">es</span></div><div class="t" style="left:591px;width:74px;text-align:right;top:2px;font-size:16px;letter-spacing:-.3px">5</div><svg class="a" style="left:672.5px;top:4px" width="17" height="14" viewBox="0 0 17 14" ><path d="M0.5 7.3 L2.9 4.6 L6.8 8.1 L14.2 0.6 L16.7 3.2 L7 13.3 Z" fill="url(#gGreen)" stroke="#2f8a2c" stroke-width=".8" stroke-linejoin="round"/><path d="M7.2 10.6 L14.4 2.6" stroke="#b4e6ac" stroke-width="1.3" stroke-linecap="round" opacity=".75"/></svg><div class="t" style="left:697px;top:2px">是</div><svg class="a" style="left:796.7px;top:2px" width="18" height="19" viewBox="0 0 18 19" ><ellipse cx="9" cy="17.8" rx="6.5" ry="1" fill="#000" opacity=".13"/><circle cx="9.05" cy="8.85" r="7.1" fill="none" stroke="url(#gRed)" stroke-width="2.6"/><path d="M4.3 4.1 L13.8 13.6" stroke="url(#gRed)" stroke-width="2.5"/></svg><div class="t" style="left:822px;top:2px">否</div><div class="t" style="left:1046px;top:2px"><span style="font-size:16px;letter-spacing:-0.15px">48000 Hz, 6 </span>声道</div><div class="t" style="left:1196px;top:2px"><span style="font-size:16px;letter-spacing:0.08px">00001.mpls</span></div><div class="t" style="left:1321px;top:2px">E:\BDMV\PLAYLIST</div></div>
<div class="row gray" style="top:155px"><svg class="a" style="left:10px;top:3px" width="20" height="17" viewBox="0 0 20 17" ><path d="M3.1 8.8 C2.8 2.6 7 0.9 10 0.9 C13 0.9 17.2 2.6 16.9 8.8" fill="none" stroke="url(#gBand)" stroke-width="1.7"/><path d="M0.5 10.2 Q1.6 7 4.5 7.3 L4.5 16.5 Q2 17 0.9 15 Q-0.1 12.6 0.5 10.2Z" fill="url(#gHPL)"/><path d="M19.5 10.2 Q18.4 7 15.5 7.3 L15.5 16.5 Q18 17 19.1 15 Q20.1 12.6 19.500000000000004 10.2Z" fill="url(#gHPR)"/></svg><div class="t" style="left:36px;top:2px">音频</div><svg class="a" style="left:147px;top:2px" width="18" height="19" viewBox="0 0 18 19" ><ellipse cx="9" cy="17.8" rx="6.5" ry="1" fill="#000" opacity=".13"/><circle cx="9.05" cy="8.85" r="7.1" fill="none" stroke="url(#gRed)" stroke-width="2.6"/><path d="M4.3 4.1 L13.8 13.6" stroke="url(#gRed)" stroke-width="2.5"/></svg><div class="t" style="left:172px;top:2px">否</div><div class="t" style="left:271px;top:2px"><span style="font-size:16px;letter-spacing:0.30px">ko</span></div><div class="t" style="left:591px;width:74px;text-align:right;top:2px;font-size:16px;letter-spacing:-.3px">6</div><svg class="a" style="left:672.5px;top:4px" width="17" height="14" viewBox="0 0 17 14" ><path d="M0.5 7.3 L2.9 4.6 L6.8 8.1 L14.2 0.6 L16.7 3.2 L7 13.3 Z" fill="url(#gGreen)" stroke="#2f8a2c" stroke-width=".8" stroke-linejoin="round"/><path d="M7.2 10.6 L14.4 2.6" stroke="#b4e6ac" stroke-width="1.3" stroke-linecap="round" opacity=".75"/></svg><div class="t" style="left:697px;top:2px">是</div><svg class="a" style="left:796.7px;top:2px" width="18" height="19" viewBox="0 0 18 19" ><ellipse cx="9" cy="17.8" rx="6.5" ry="1" fill="#000" opacity=".13"/><circle cx="9.05" cy="8.85" r="7.1" fill="none" stroke="url(#gRed)" stroke-width="2.6"/><path d="M4.3 4.1 L13.8 13.6" stroke="url(#gRed)" stroke-width="2.5"/></svg><div class="t" style="left:822px;top:2px">否</div><div class="t" style="left:1046px;top:2px"><span style="font-size:16px;letter-spacing:-0.15px">48000 Hz, 6 </span>声道</div><div class="t" style="left:1196px;top:2px"><span style="font-size:16px;letter-spacing:0.08px">00001.mpls</span></div><div class="t" style="left:1321px;top:2px">E:\BDMV\PLAYLIST</div></div>
<div class="row gray" style="top:177px"><svg class="a" style="left:10px;top:3px" width="20" height="17" viewBox="0 0 20 17" ><path d="M3.1 8.8 C2.8 2.6 7 0.9 10 0.9 C13 0.9 17.2 2.6 16.9 8.8" fill="none" stroke="url(#gBand)" stroke-width="1.7"/><path d="M0.5 10.2 Q1.6 7 4.5 7.3 L4.5 16.5 Q2 17 0.9 15 Q-0.1 12.6 0.5 10.2Z" fill="url(#gHPL)"/><path d="M19.5 10.2 Q18.4 7 15.5 7.3 L15.5 16.5 Q18 17 19.1 15 Q20.1 12.6 19.500000000000004 10.2Z" fill="url(#gHPR)"/></svg><div class="t" style="left:36px;top:2px">音频</div><svg class="a" style="left:147px;top:2px" width="18" height="19" viewBox="0 0 18 19" ><ellipse cx="9" cy="17.8" rx="6.5" ry="1" fill="#000" opacity=".13"/><circle cx="9.05" cy="8.85" r="7.1" fill="none" stroke="url(#gRed)" stroke-width="2.6"/><path d="M4.3 4.1 L13.8 13.6" stroke="url(#gRed)" stroke-width="2.5"/></svg><div class="t" style="left:172px;top:2px">否</div><div class="t" style="left:271px;top:2px"><span style="font-size:16px;letter-spacing:-0.55px">zh</span></div><div class="t" style="left:591px;width:74px;text-align:right;top:2px;font-size:16px;letter-spacing:-.3px">7</div><svg class="a" style="left:672.5px;top:4px" width="17" height="14" viewBox="0 0 17 14" ><path d="M0.5 7.3 L2.9 4.6 L6.8 8.1 L14.2 0.6 L16.7 3.2 L7 13.3 Z" fill="url(#gGreen)" stroke="#2f8a2c" stroke-width=".8" stroke-linejoin="round"/><path d="M7.2 10.6 L14.4 2.6" stroke="#b4e6ac" stroke-width="1.3" stroke-linecap="round" opacity=".75"/></svg><div class="t" style="left:697px;top:2px">是</div><svg class="a" style="left:796.7px;top:2px" width="18" height="19" viewBox="0 0 18 19" ><ellipse cx="9" cy="17.8" rx="6.5" ry="1" fill="#000" opacity=".13"/><circle cx="9.05" cy="8.85" r="7.1" fill="none" stroke="url(#gRed)" stroke-width="2.6"/><path d="M4.3 4.1 L13.8 13.6" stroke="url(#gRed)" stroke-width="2.5"/></svg><div class="t" style="left:822px;top:2px">否</div><div class="t" style="left:1046px;top:2px"><span style="font-size:16px;letter-spacing:-0.15px">48000 Hz, 6 </span>声道</div><div class="t" style="left:1196px;top:2px"><span style="font-size:16px;letter-spacing:0.08px">00001.mpls</span></div><div class="t" style="left:1321px;top:2px">E:\BDMV\PLAYLIST</div></div>
<div class="row" style="top:199px"><svg class="a" style="left:10px;top:3px" width="20" height="17" viewBox="0 0 20 17" ><path d="M3.1 8.8 C2.8 2.6 7 0.9 10 0.9 C13 0.9 17.2 2.6 16.9 8.8" fill="none" stroke="url(#gBand)" stroke-width="1.7"/><path d="M0.5 10.2 Q1.6 7 4.5 7.3 L4.5 16.5 Q2 17 0.9 15 Q-0.1 12.6 0.5 10.2Z" fill="url(#gHPL)"/><path d="M19.5 10.2 Q18.4 7 15.5 7.3 L15.5 16.5 Q18 17 19.1 15 Q20.1 12.6 19.500000000000004 10.2Z" fill="url(#gHPR)"/></svg><div class="t" style="left:36px;top:2px">音频</div><svg class="a" style="left:147.5px;top:4px" width="17" height="14" viewBox="0 0 17 14" ><path d="M0.5 7.3 L2.9 4.6 L6.8 8.1 L14.2 0.6 L16.7 3.2 L7 13.3 Z" fill="url(#gGreen)" stroke="#2f8a2c" stroke-width=".8" stroke-linejoin="round"/><path d="M7.2 10.6 L14.4 2.6" stroke="#b4e6ac" stroke-width="1.3" stroke-linecap="round" opacity=".75"/></svg><div class="t" style="left:172px;top:2px">是</div><div class="t" style="left:271px;top:2px"><span style="font-size:16px;letter-spacing:-0.55px">zh</span></div><div class="t" style="left:396px;top:2px">粤语5.1</div><div class="t" style="left:591px;width:74px;text-align:right;top:2px;font-size:16px;letter-spacing:-.3px">8</div><svg class="a" style="left:672.5px;top:4px" width="17" height="14" viewBox="0 0 17 14" ><path d="M0.5 7.3 L2.9 4.6 L6.8 8.1 L14.2 0.6 L16.7 3.2 L7 13.3 Z" fill="url(#gGreen)" stroke="#2f8a2c" stroke-width=".8" stroke-linejoin="round"/><path d="M7.2 10.6 L14.4 2.6" stroke="#b4e6ac" stroke-width="1.3" stroke-linecap="round" opacity=".75"/></svg><div class="t" style="left:697px;top:2px">是</div><svg class="a" style="left:796.7px;top:2px" width="18" height="19" viewBox="0 0 18 19" ><ellipse cx="9" cy="17.8" rx="6.5" ry="1" fill="#000" opacity=".13"/><circle cx="9.05" cy="8.85" r="7.1" fill="none" stroke="url(#gRed)" stroke-width="2.6"/><path d="M4.3 4.1 L13.8 13.6" stroke="url(#gRed)" stroke-width="2.5"/></svg><div class="t" style="left:822px;top:2px">否</div><div class="t" style="left:1046px;top:2px"><span style="font-size:16px;letter-spacing:-0.15px">48000 Hz, 6 </span>声道</div><div class="t" style="left:1196px;top:2px"><span style="font-size:16px;letter-spacing:0.08px">00001.mpls</span></div><div class="t" style="left:1321px;top:2px">E:\BDMV\PLAYLIST</div></div>
<div class="row" style="top:221px"><svg class="a" style="left:10px;top:3px" width="20" height="17" viewBox="0 0 20 17" ><path d="M3.1 8.8 C2.8 2.6 7 0.9 10 0.9 C13 0.9 17.2 2.6 16.9 8.8" fill="none" stroke="url(#gBand)" stroke-width="1.7"/><path d="M0.5 10.2 Q1.6 7 4.5 7.3 L4.5 16.5 Q2 17 0.9 15 Q-0.1 12.6 0.5 10.2Z" fill="url(#gHPL)"/><path d="M19.5 10.2 Q18.4 7 15.5 7.3 L15.5 16.5 Q18 17 19.1 15 Q20.1 12.6 19.500000000000004 10.2Z" fill="url(#gHPR)"/></svg><div class="t" style="left:36px;top:2px">音频</div><svg class="a" style="left:147.5px;top:4px" width="17" height="14" viewBox="0 0 17 14" ><path d="M0.5 7.3 L2.9 4.6 L6.8 8.1 L14.2 0.6 L16.7 3.2 L7 13.3 Z" fill="url(#gGreen)" stroke="#2f8a2c" stroke-width=".8" stroke-linejoin="round"/><path d="M7.2 10.6 L14.4 2.6" stroke="#b4e6ac" stroke-width="1.3" stroke-linecap="round" opacity=".75"/></svg><div class="t" style="left:172px;top:2px">是</div><div class="t" style="left:271px;top:2px"><span style="font-size:16px;letter-spacing:-0.12px">ja</span></div><div class="t" style="left:396px;top:2px">日语带解说2.0</div><div class="t" style="left:591px;width:74px;text-align:right;top:2px;font-size:16px;letter-spacing:-.3px">9</div><svg class="a" style="left:672.5px;top:4px" width="17" height="14" viewBox="0 0 17 14" ><path d="M0.5 7.3 L2.9 4.6 L6.8 8.1 L14.2 0.6 L16.7 3.2 L7 13.3 Z" fill="url(#gGreen)" stroke="#2f8a2c" stroke-width=".8" stroke-linejoin="round"/><path d="M7.2 10.6 L14.4 2.6" stroke="#b4e6ac" stroke-width="1.3" stroke-linecap="round" opacity=".75"/></svg><div class="t" style="left:697px;top:2px">是</div><svg class="a" style="left:796.7px;top:2px" width="18" height="19" viewBox="0 0 18 19" ><ellipse cx="9" cy="17.8" rx="6.5" ry="1" fill="#000" opacity=".13"/><circle cx="9.05" cy="8.85" r="7.1" fill="none" stroke="url(#gRed)" stroke-width="2.6"/><path d="M4.3 4.1 L13.8 13.6" stroke="url(#gRed)" stroke-width="2.5"/></svg><div class="t" style="left:822px;top:2px">否</div><div class="t" style="left:1046px;top:2px"><span style="font-size:16px;letter-spacing:-0.15px">48000 Hz, 2 </span>声道</div><div class="t" style="left:1196px;top:2px"><span style="font-size:16px;letter-spacing:0.08px">00001.mpls</span></div><div class="t" style="left:1321px;top:2px">E:\BDMV\PLAYLIST</div></div>
<div class="row" style="top:243px"><div class="t" style="left:-6px;top:2px;width:9px;overflow:hidden;direction:rtl;color:#000">.</div><svg class="a" style="left:10px;top:3px" width="20" height="17" viewBox="0 0 20 17" ><path d="M3.1 8.8 C2.8 2.6 7 0.9 10 0.9 C13 0.9 17.2 2.6 16.9 8.8" fill="none" stroke="url(#gBand)" stroke-width="1.7"/><path d="M0.5 10.2 Q1.6 7 4.5 7.3 L4.5 16.5 Q2 17 0.9 15 Q-0.1 12.6 0.5 10.2Z" fill="url(#gHPL)"/><path d="M19.5 10.2 Q18.4 7 15.5 7.3 L15.5 16.5 Q18 17 19.1 15 Q20.1 12.6 19.500000000000004 10.2Z" fill="url(#gHPR)"/></svg><div class="t" style="left:36px;top:2px">音频</div><svg class="a" style="left:147.5px;top:4px" width="17" height="14" viewBox="0 0 17 14" ><path d="M0.5 7.3 L2.9 4.6 L6.8 8.1 L14.2 0.6 L16.7 3.2 L7 13.3 Z" fill="url(#gGreen)" stroke="#2f8a2c" stroke-width=".8" stroke-linejoin="round"/><path d="M7.2 10.6 L14.4 2.6" stroke="#b4e6ac" stroke-width="1.3" stroke-linecap="round" opacity=".75"/></svg><div class="t" style="left:172px;top:2px">是</div><div class="t" style="left:271px;top:2px"><span style="font-size:16px;letter-spacing:-0.12px">ja</span></div><div class="t" style="left:396px;top:2px">日语7.1</div><div class="t" style="left:591px;width:74px;text-align:right;top:2px;font-size:16px;letter-spacing:-.3px">1</div><svg class="a" style="left:672.5px;top:4px" width="17" height="14" viewBox="0 0 17 14" ><path d="M0.5 7.3 L2.9 4.6 L6.8 8.1 L14.2 0.6 L16.7 3.2 L7 13.3 Z" fill="url(#gGreen)" stroke="#2f8a2c" stroke-width=".8" stroke-linejoin="round"/><path d="M7.2 10.6 L14.4 2.6" stroke="#b4e6ac" stroke-width="1.3" stroke-linecap="round" opacity=".75"/></svg><div class="t" style="left:697px;top:2px">是</div><svg class="a" style="left:796.7px;top:2px" width="18" height="19" viewBox="0 0 18 19" ><ellipse cx="9" cy="17.8" rx="6.5" ry="1" fill="#000" opacity=".13"/><circle cx="9.05" cy="8.85" r="7.1" fill="none" stroke="url(#gRed)" stroke-width="2.6"/><path d="M4.3 4.1 L13.8 13.6" stroke="url(#gRed)" stroke-width="2.5"/></svg><div class="t" style="left:822px;top:2px">否</div><div class="t" style="left:1046px;top:2px"><span style="font-size:16px;letter-spacing:-0.15px">48000 Hz, 8 </span>声道</div><div class="t" style="left:1196px;top:2px"><span style="font-size:16px;letter-spacing:-0.12px">The Boy and t...</span></div><div class="t" style="left:1321px;top:2px">F:\光盘复制</div></div>
<div class="row sel" style="top:265px"><div class="a" style="left:392px;top:0;width:150px;height:22px;background:#1a84dc"></div><svg class="a" style="left:10px;top:3px" width="20" height="17" viewBox="0 0 20 17" ><path d="M3.1 8.8 C2.8 2.6 7 0.9 10 0.9 C13 0.9 17.2 2.6 16.9 8.8" fill="none" stroke="url(#gBand)" stroke-width="1.7"/><path d="M0.5 10.2 Q1.6 7 4.5 7.3 L4.5 16.5 Q2 17 0.9 15 Q-0.1 12.6 0.5 10.2Z" fill="url(#gHPL)"/><path d="M19.5 10.2 Q18.4 7 15.5 7.3 L15.5 16.5 Q18 17 19.1 15 Q20.1 12.6 19.500000000000004 10.2Z" fill="url(#gHPR)"/></svg><div class="t" style="left:36px;top:2px">音频</div><svg class="a" style="left:147.5px;top:4px" width="17" height="14" viewBox="0 0 17 14" ><path d="M0.5 7.3 L2.9 4.6 L6.8 8.1 L14.2 0.6 L16.7 3.2 L7 13.3 Z" fill="url(#gGreen)" stroke="#2f8a2c" stroke-width=".8" stroke-linejoin="round"/><path d="M7.2 10.6 L14.4 2.6" stroke="#b4e6ac" stroke-width="1.3" stroke-linecap="round" opacity=".75"/></svg><div class="t" style="left:172px;top:2px">是</div><div class="t" style="left:271px;top:2px"><span style="font-size:16px;letter-spacing:-0.12px">ja</span></div><div class="t" style="left:396px;top:2px">日语5.1</div><div class="t" style="left:591px;width:74px;text-align:right;top:2px;font-size:16px;letter-spacing:-.3px">2</div><svg class="a" style="left:672.5px;top:4px" width="17" height="14" viewBox="0 0 17 14" ><path d="M0.5 7.3 L2.9 4.6 L6.8 8.1 L14.2 0.6 L16.7 3.2 L7 13.3 Z" fill="url(#gGreen)" stroke="#2f8a2c" stroke-width=".8" stroke-linejoin="round"/><path d="M7.2 10.6 L14.4 2.6" stroke="#b4e6ac" stroke-width="1.3" stroke-linecap="round" opacity=".75"/></svg><div class="t" style="left:697px;top:2px">是</div><svg class="a" style="left:796.7px;top:2px" width="18" height="19" viewBox="0 0 18 19" ><ellipse cx="9" cy="17.8" rx="6.5" ry="1" fill="#000" opacity=".13"/><circle cx="9.05" cy="8.85" r="7.1" fill="none" stroke="url(#gRed)" stroke-width="2.6"/><path d="M4.3 4.1 L13.8 13.6" stroke="url(#gRed)" stroke-width="2.5"/></svg><div class="t" style="left:822px;top:2px">否</div><div class="t" style="left:1046px;top:2px"><span style="font-size:16px;letter-spacing:-0.15px">48000 Hz, 6 </span>声道</div><div class="t" style="left:1196px;top:2px"><span style="font-size:16px;letter-spacing:-0.12px">The Boy and t...</span></div><div class="t" style="left:1321px;top:2px">F:\光盘复制</div></div>
<div class="row" style="top:287px"><svg class="a" style="left:10px;top:3px" width="20" height="17" viewBox="0 0 20 17" ><path d="M3.1 8.8 C2.8 2.6 7 0.9 10 0.9 C13 0.9 17.2 2.6 16.9 8.8" fill="none" stroke="url(#gBand)" stroke-width="1.7"/><path d="M0.5 10.2 Q1.6 7 4.5 7.3 L4.5 16.5 Q2 17 0.9 15 Q-0.1 12.6 0.5 10.2Z" fill="url(#gHPL)"/><path d="M19.5 10.2 Q18.4 7 15.5 7.3 L15.5 16.5 Q18 17 19.1 15 Q20.1 12.6 19.500000000000004 10.2Z" fill="url(#gHPR)"/></svg><div class="t" style="left:36px;top:2px">音频</div><svg class="a" style="left:147.5px;top:4px" width="17" height="14" viewBox="0 0 17 14" ><path d="M0.5 7.3 L2.9 4.6 L6.8 8.1 L14.2 0.6 L16.7 3.2 L7 13.3 Z" fill="url(#gGreen)" stroke="#2f8a2c" stroke-width=".8" stroke-linejoin="round"/><path d="M7.2 10.6 L14.4 2.6" stroke="#b4e6ac" stroke-width="1.3" stroke-linecap="round" opacity=".75"/></svg><div class="t" style="left:172px;top:2px">是</div><div class="t" style="left:271px;top:2px"><span style="font-size:16px;letter-spacing:-0.55px">zh</span></div><div class="t" style="left:396px;top:2px">公映普通话2.0</div><div class="t" style="left:591px;width:74px;text-align:right;top:2px;font-size:16px;letter-spacing:-.3px">3</div><svg class="a" style="left:672.5px;top:4px" width="17" height="14" viewBox="0 0 17 14" ><path d="M0.5 7.3 L2.9 4.6 L6.8 8.1 L14.2 0.6 L16.7 3.2 L7 13.3 Z" fill="url(#gGreen)" stroke="#2f8a2c" stroke-width=".8" stroke-linejoin="round"/><path d="M7.2 10.6 L14.4 2.6" stroke="#b4e6ac" stroke-width="1.3" stroke-linecap="round" opacity=".75"/></svg><div class="t" style="left:697px;top:2px">是</div><svg class="a" style="left:796.7px;top:2px" width="18" height="19" viewBox="0 0 18 19" ><ellipse cx="9" cy="17.8" rx="6.5" ry="1" fill="#000" opacity=".13"/><circle cx="9.05" cy="8.85" r="7.1" fill="none" stroke="url(#gRed)" stroke-width="2.6"/><path d="M4.3 4.1 L13.8 13.6" stroke="url(#gRed)" stroke-width="2.5"/></svg><div class="t" style="left:822px;top:2px">否</div><div class="t" style="left:1046px;top:2px"><span style="font-size:16px;letter-spacing:-0.15px">48000 Hz, 6 </span>声道</div><div class="t" style="left:1196px;top:2px"><span style="font-size:16px;letter-spacing:-0.12px">The Boy and t...</span></div><div class="t" style="left:1321px;top:2px">F:\光盘复制</div></div>
<div class="row" style="top:309px"><svg class="a" style="left:10px;top:3px" width="20" height="17" viewBox="0 0 20 17" ><path d="M3.1 8.8 C2.8 2.6 7 0.9 10 0.9 C13 0.9 17.2 2.6 16.9 8.8" fill="none" stroke="url(#gBand)" stroke-width="1.7"/><path d="M0.5 10.2 Q1.6 7 4.5 7.3 L4.5 16.5 Q2 17 0.9 15 Q-0.1 12.6 0.5 10.2Z" fill="url(#gHPL)"/><path d="M19.5 10.2 Q18.4 7 15.5 7.3 L15.5 16.5 Q18 17 19.1 15 Q20.1 12.6 19.500000000000004 10.2Z" fill="url(#gHPR)"/></svg><div class="t" style="left:36px;top:2px">音频</div><svg class="a" style="left:147.5px;top:4px" width="17" height="14" viewBox="0 0 17 14" ><path d="M0.5 7.3 L2.9 4.6 L6.8 8.1 L14.2 0.6 L16.7 3.2 L7 13.3 Z" fill="url(#gGreen)" stroke="#2f8a2c" stroke-width=".8" stroke-linejoin="round"/><path d="M7.2 10.6 L14.4 2.6" stroke="#b4e6ac" stroke-width="1.3" stroke-linecap="round" opacity=".75"/></svg><div class="t" style="left:172px;top:2px">是</div><div class="t" style="left:271px;top:2px"><span style="font-size:16px;letter-spacing:-0.55px">zh</span></div><div class="t" style="left:396px;top:2px">台配5.1</div><div class="t" style="left:591px;width:74px;text-align:right;top:2px;font-size:16px;letter-spacing:-.3px">4</div><svg class="a" style="left:672.5px;top:4px" width="17" height="14" viewBox="0 0 17 14" ><path d="M0.5 7.3 L2.9 4.6 L6.8 8.1 L14.2 0.6 L16.7 3.2 L7 13.3 Z" fill="url(#gGreen)" stroke="#2f8a2c" stroke-width=".8" stroke-linejoin="round"/><path d="M7.2 10.6 L14.4 2.6" stroke="#b4e6ac" stroke-width="1.3" stroke-linecap="round" opacity=".75"/></svg><div class="t" style="left:697px;top:2px">是</div><svg class="a" style="left:796.7px;top:2px" width="18" height="19" viewBox="0 0 18 19" ><ellipse cx="9" cy="17.8" rx="6.5" ry="1" fill="#000" opacity=".13"/><circle cx="9.05" cy="8.85" r="7.1" fill="none" stroke="url(#gRed)" stroke-width="2.6"/><path d="M4.3 4.1 L13.8 13.6" stroke="url(#gRed)" stroke-width="2.5"/></svg><div class="t" style="left:822px;top:2px">否</div><div class="t" style="left:1046px;top:2px"><span style="font-size:16px;letter-spacing:-0.15px">48000 Hz, 6 </span>声道</div><div class="t" style="left:1196px;top:2px"><span style="font-size:16px;letter-spacing:-0.12px">The Boy and t...</span></div><div class="t" style="left:1321px;top:2px">F:\光盘复制</div></div>
<div class="row" style="top:331px"><div class="t" style="left:-6px;top:2px;width:9px;overflow:hidden;direction:rtl;color:#000">S</div><svg class="a" style="left:11px;top:2px" width="17" height="18" viewBox="0 0 17 18" ><path d="M1.5 0 v18 M15.5 0 v18 M0 1.5 h17 M0 16.5 h17" stroke="#c2d3f0" stroke-width="1"/><text x="8.5" y="12.35" transform="scale(1 1.31)" text-anchor="middle" font-family="Liberation Serif, serif" font-weight="bold" font-size="18" fill="url(#gT)" stroke="url(#gT)" stroke-width=".9" stroke-linejoin="round">T</text></svg><div class="t" style="left:36px;top:2px">字幕</div><svg class="a" style="left:147.5px;top:4px" width="17" height="14" viewBox="0 0 17 14" ><path d="M0.5 7.3 L2.9 4.6 L6.8 8.1 L14.2 0.6 L16.7 3.2 L7 13.3 Z" fill="url(#gGreen)" stroke="#2f8a2c" stroke-width=".8" stroke-linejoin="round"/><path d="M7.2 10.6 L14.4 2.6" stroke="#b4e6ac" stroke-width="1.3" stroke-linecap="round" opacity=".75"/></svg><div class="t" style="left:172px;top:2px">是</div><div class="t" style="left:271px;top:2px"><span style="font-size:16px;letter-spacing:-0.12px">ja</span></div><div class="t" style="left:396px;top:2px">日语</div><div class="t" style="left:591px;width:74px;text-align:right;top:2px;font-size:16px;letter-spacing:-.3px">10</div><svg class="a" style="left:672.5px;top:4px" width="17" height="14" viewBox="0 0 17 14" ><path d="M0.5 7.3 L2.9 4.6 L6.8 8.1 L14.2 0.6 L16.7 3.2 L7 13.3 Z" fill="url(#gGreen)" stroke="#2f8a2c" stroke-width=".8" stroke-linejoin="round"/><path d="M7.2 10.6 L14.4 2.6" stroke="#b4e6ac" stroke-width="1.3" stroke-linecap="round" opacity=".75"/></svg><div class="t" style="left:697px;top:2px">是</div><svg class="a" style="left:796.7px;top:2px" width="18" height="19" viewBox="0 0 18 19" ><ellipse cx="9" cy="17.8" rx="6.5" ry="1" fill="#000" opacity=".13"/><circle cx="9.05" cy="8.85" r="7.1" fill="none" stroke="url(#gRed)" stroke-width="2.6"/><path d="M4.3 4.1 L13.8 13.6" stroke="url(#gRed)" stroke-width="2.5"/></svg><div class="t" style="left:822px;top:2px">否</div><div class="t" style="left:1196px;top:2px"><span style="font-size:16px;letter-spacing:0.08px">00001.mpls</span></div><div class="t" style="left:1321px;top:2px">E:\BDMV\PLAYLIST</div></div>
<div class="row gray" style="top:353px"><div class="t" style="left:-6px;top:2px;width:9px;overflow:hidden;direction:rtl;color:#777">S</div><svg class="a" style="left:11px;top:2px" width="17" height="18" viewBox="0 0 17 18" ><path d="M1.5 0 v18 M15.5 0 v18 M0 1.5 h17 M0 16.5 h17" stroke="#c2d3f0" stroke-width="1"/><text x="8.5" y="12.35" transform="scale(1 1.31)" text-anchor="middle" font-family="Liberation Serif, serif" font-weight="bold" font-size="18" fill="url(#gT)" stroke="url(#gT)" stroke-width=".9" stroke-linejoin="round">T</text></svg><div class="t" style="left:36px;top:2px">字幕</div><svg class="a" style="left:147px;top:2px" width="18" height="19" viewBox="0 0 18 19" ><ellipse cx="9" cy="17.8" rx="6.5" ry="1" fill="#000" opacity=".13"/><circle cx="9.05" cy="8.85" r="7.1" fill="none" stroke="url(#gRed)" stroke-width="2.6"/><path d="M4.3 4.1 L13.8 13.6" stroke="url(#gRed)" stroke-width="2.5"/></svg><div class="t" style="left:172px;top:2px">否</div><div class="t" style="left:271px;top:2px"><span style="font-size:16px;letter-spacing:0.00px">en</span></div><div class="t" style="left:591px;width:74px;text-align:right;top:2px;font-size:16px;letter-spacing:-.3px">11</div><svg class="a" style="left:672.5px;top:4px" width="17" height="14" viewBox="0 0 17 14" ><path d="M0.5 7.3 L2.9 4.6 L6.8 8.1 L14.2 0.6 L16.7 3.2 L7 13.3 Z" fill="url(#gGreen)" stroke="#2f8a2c" stroke-width=".8" stroke-linejoin="round"/><path d="M7.2 10.6 L14.4 2.6" stroke="#b4e6ac" stroke-width="1.3" stroke-linecap="round" opacity=".75"/></svg><div class="t" style="left:697px;top:2px">是</div><svg class="a" style="left:796.7px;top:2px" width="18" height="19" viewBox="0 0 18 19" ><ellipse cx="9" cy="17.8" rx="6.5" ry="1" fill="#000" opacity=".13"/><circle cx="9.05" cy="8.85" r="7.1" fill="none" stroke="url(#gRed)" stroke-width="2.6"/><path d="M4.3 4.1 L13.8 13.6" stroke="url(#gRed)" stroke-width="2.5"/></svg><div class="t" style="left:822px;top:2px">否</div><div class="t" style="left:1196px;top:2px"><span style="font-size:16px;letter-spacing:0.08px">00001.mpls</span></div><div class="t" style="left:1321px;top:2px">E:\BDMV\PLAYLIST</div></div>
<div class="row gray" style="top:375px"><div class="t" style="left:-6px;top:2px;width:9px;overflow:hidden;direction:rtl;color:#777">S</div><svg class="a" style="left:11px;top:2px" width="17" height="18" viewBox="0 0 17 18" ><path d="M1.5 0 v18 M15.5 0 v18 M0 1.5 h17 M0 16.5 h17" stroke="#c2d3f0" stroke-width="1"/><text x="8.5" y="12.35" transform="scale(1 1.31)" text-anchor="middle" font-family="Liberation Serif, serif" font-weight="bold" font-size="18" fill="url(#gT)" stroke="url(#gT)" stroke-width=".9" stroke-linejoin="round">T</text></svg><div class="t" style="left:36px;top:2px">字幕</div><svg class="a" style="left:147px;top:2px" width="18" height="19" viewBox="0 0 18 19" ><ellipse cx="9" cy="17.8" rx="6.5" ry="1" fill="#000" opacity=".13"/><circle cx="9.05" cy="8.85" r="7.1" fill="none" stroke="url(#gRed)" stroke-width="2.6"/><path d="M4.3 4.1 L13.8 13.6" stroke="url(#gRed)" stroke-width="2.5"/></svg><div class="t" style="left:172px;top:2px">否</div><div class="t" style="left:271px;top:2px"><span style="font-size:16px;letter-spacing:0.71px">fr</span></div><div class="t" style="left:591px;width:74px;text-align:right;top:2px;font-size:16px;letter-spacing:-.3px">12</div><svg class="a" style="left:672.5px;top:4px" width="17" height="14" viewBox="0 0 17 14" ><path d="M0.5 7.3 L2.9 4.6 L6.8 8.1 L14.2 0.6 L16.7 3.2 L7 13.3 Z" fill="url(#gGreen)" stroke="#2f8a2c" stroke-width=".8" stroke-linejoin="round"/><path d="M7.2 10.6 L14.4 2.6" stroke="#b4e6ac" stroke-width="1.3" stroke-linecap="round" opacity=".75"/></svg><div class="t" style="left:697px;top:2px">是</div><svg class="a" style="left:796.7px;top:2px" width="18" height="19" viewBox="0 0 18 19" ><ellipse cx="9" cy="17.8" rx="6.5" ry="1" fill="#000" opacity=".13"/><circle cx="9.05" cy="8.85" r="7.1" fill="none" stroke="url(#gRed)" stroke-width="2.6"/><path d="M4.3 4.1 L13.8 13.6" stroke="url(#gRed)" stroke-width="2.5"/></svg><div class="t" style="left:822px;top:2px">否</div><div class="t" style="left:1196px;top:2px"><span style="font-size:16px;letter-spacing:0.08px">00001.mpls</span></div><div class="t" style="left:1321px;top:2px">E:\BDMV\PLAYLIST</div></div>
<div class="row gray" style="top:397px"><div class="t" style="left:-6px;top:2px;width:9px;overflow:hidden;direction:rtl;color:#777">S</div><svg class="a" style="left:11px;top:2px" width="17" height="18" viewBox="0 0 17 18" ><path d="M1.5 0 v18 M15.5 0 v18 M0 1.5 h17 M0 16.5 h17" stroke="#c2d3f0" stroke-width="1"/><text x="8.5" y="12.35" transform="scale(1 1.31)" text-anchor="middle" font-family="Liberation Serif, serif" font-weight="bold" font-size="18" fill="url(#gT)" stroke="url(#gT)" stroke-width=".9" stroke-linejoin="round">T</text></svg><div class="t" style="left:36px;top:2px">字幕</div><svg class="a" style="left:147px;top:2px" width="18" height="19" viewBox="0 0 18 19" ><ellipse cx="9" cy="17.8" rx="6.5" ry="1" fill="#000" opacity=".13"/><circle cx="9.05" cy="8.85" r="7.1" fill="none" stroke="url(#gRed)" stroke-width="2.6"/><path d="M4.3 4.1 L13.8 13.6" stroke="url(#gRed)" stroke-width="2.5"/></svg><div class="t" style="left:172px;top:2px">否</div><div class="t" style="left:271px;top:2px"><span style="font-size:16px;letter-spacing:-0.70px">es</span></div><div class="t" style="left:591px;width:74px;text-align:right;top:2px;font-size:16px;letter-spacing:-.3px">13</div><svg class="a" style="left:672.5px;top:4px" width="17" height="14" viewBox="0 0 17 14" ><path d="M0.5 7.3 L2.9 4.6 L6.8 8.1 L14.2 0.6 L16.7 3.2 L7 13.3 Z" fill="url(#gGreen)" stroke="#2f8a2c" stroke-width=".8" stroke-linejoin="round"/><path d="M7.2 10.6 L14.4 2.6" stroke="#b4e6ac" stroke-width="1.3" stroke-linecap="round" opacity=".75"/></svg><div class="t" style="left:697px;top:2px">是</div><svg class="a" style="left:796.7px;top:2px" width="18" height="19" viewBox="0 0 18 19" ><ellipse cx="9" cy="17.8" rx="6.5" ry="1" fill="#000" opacity=".13"/><circle cx="9.05" cy="8.85" r="7.1" fill="none" stroke="url(#gRed)" stroke-width="2.6"/><path d="M4.3 4.1 L13.8 13.6" stroke="url(#gRed)" stroke-width="2.5"/></svg><div class="t" style="left:822px;top:2px">否</div><div class="t" style="left:1196px;top:2px"><span style="font-size:16px;letter-spacing:0.08px">00001.mpls</span></div><div class="t" style="left:1321px;top:2px">E:\BDMV\PLAYLIST</div></div>
<div class="row gray" style="top:419px"><div class="t" style="left:-6px;top:2px;width:9px;overflow:hidden;direction:rtl;color:#777">S</div><svg class="a" style="left:11px;top:2px" width="17" height="18" viewBox="0 0 17 18" ><path d="M1.5 0 v18 M15.5 0 v18 M0 1.5 h17 M0 16.5 h17" stroke="#c2d3f0" stroke-width="1"/><text x="8.5" y="12.35" transform="scale(1 1.31)" text-anchor="middle" font-family="Liberation Serif, serif" font-weight="bold" font-size="18" fill="url(#gT)" stroke="url(#gT)" stroke-width=".9" stroke-linejoin="round">T</text></svg><div class="t" style="left:36px;top:2px">字幕</div><svg class="a" style="left:147px;top:2px" width="18" height="19" viewBox="0 0 18 19" ><ellipse cx="9" cy="17.8" rx="6.5" ry="1" fill="#000" opacity=".13"/><circle cx="9.05" cy="8.85" r="7.1" fill="none" stroke="url(#gRed)" stroke-width="2.6"/><path d="M4.3 4.1 L13.8 13.6" stroke="url(#gRed)" stroke-width="2.5"/></svg><div class="t" style="left:172px;top:2px">否</div><div class="t" style="left:271px;top:2px"><span style="font-size:16px;letter-spacing:0.30px">ko</span></div><div class="t" style="left:591px;width:74px;text-align:right;top:2px;font-size:16px;letter-spacing:-.3px">14</div><svg class="a" style="left:672.5px;top:4px" width="17" height="14" viewBox="0 0 17 14" ><path d="M0.5 7.3 L2.9 4.6 L6.8 8.1 L14.2 0.6 L16.7 3.2 L7 13.3 Z" fill="url(#gGreen)" stroke="#2f8a2c" stroke-width=".8" stroke-linejoin="round"/><path d="M7.2 10.6 L14.4 2.6" stroke="#b4e6ac" stroke-width="1.3" stroke-linecap="round" opacity=".75"/></svg><div class="t" style="left:697px;top:2px">是</div><svg class="a" style="left:796.7px;top:2px" width="18" height="19" viewBox="0 0 18 19" ><ellipse cx="9" cy="17.8" rx="6.5" ry="1" fill="#000" opacity=".13"/><circle cx="9.05" cy="8.85" r="7.1" fill="none" stroke="url(#gRed)" stroke-width="2.6"/><path d="M4.3 4.1 L13.8 13.6" stroke="url(#gRed)" stroke-width="2.5"/></svg><div class="t" style="left:822px;top:2px">否</div><div class="t" style="left:1196px;top:2px"><span style="font-size:16px;letter-spacing:0.08px">00001.mpls</span></div><div class="t" style="left:1321px;top:2px">E:\BDMV\PLAYLIST</div></div>
<div class="row" style="top:441px"><div class="t" style="left:-6px;top:2px;width:9px;overflow:hidden;direction:rtl;color:#000">S</div><svg class="a" style="left:11px;top:2px" width="17" height="18" viewBox="0 0 17 18" ><path d="M1.5 0 v18 M15.5 0 v18 M0 1.5 h17 M0 16.5 h17" stroke="#c2d3f0" stroke-width="1"/><text x="8.5" y="12.35" transform="scale(1 1.31)" text-anchor="middle" font-family="Liberation Serif, serif" font-weight="bold" font-size="18" fill="url(#gT)" stroke="url(#gT)" stroke-width=".9" stroke-linejoin="round">T</text></svg><div class="t" style="left:36px;top:2px">字幕</div><svg class="a" style="left:147.5px;top:4px" width="17" height="14" viewBox="0 0 17 14" ><path d="M0.5 7.3 L2.9 4.6 L6.8 8.1 L14.2 0.6 L16.7 3.2 L7 13.3 Z" fill="url(#gGreen)" stroke="#2f8a2c" stroke-width=".8" stroke-linejoin="round"/><path d="M7.2 10.6 L14.4 2.6" stroke="#b4e6ac" stroke-width="1.3" stroke-linecap="round" opacity=".75"/></svg><div class="t" style="left:172px;top:2px">是</div><div class="t" style="left:271px;top:2px"><span style="font-size:16px;letter-spacing:-0.55px">zh</span></div><div class="t" style="left:396px;top:2px">原盘繁粤</div><div class="t" style="left:591px;width:74px;text-align:right;top:2px;font-size:16px;letter-spacing:-.3px">15</div><svg class="a" style="left:672.5px;top:4px" width="17" height="14" viewBox="0 0 17 14" ><path d="M0.5 7.3 L2.9 4.6 L6.8 8.1 L14.2 0.6 L16.7 3.2 L7 13.3 Z" fill="url(#gGreen)" stroke="#2f8a2c" stroke-width=".8" stroke-linejoin="round"/><path d="M7.2 10.6 L14.4 2.6" stroke="#b4e6ac" stroke-width="1.3" stroke-linecap="round" opacity=".75"/></svg><div class="t" style="left:697px;top:2px">是</div><svg class="a" style="left:796.7px;top:2px" width="18" height="19" viewBox="0 0 18 19" ><ellipse cx="9" cy="17.8" rx="6.5" ry="1" fill="#000" opacity=".13"/><circle cx="9.05" cy="8.85" r="7.1" fill="none" stroke="url(#gRed)" stroke-width="2.6"/><path d="M4.3 4.1 L13.8 13.6" stroke="url(#gRed)" stroke-width="2.5"/></svg><div class="t" style="left:822px;top:2px">否</div><div class="t" style="left:1196px;top:2px"><span style="font-size:16px;letter-spacing:0.08px">00001.mpls</span></div><div class="t" style="left:1321px;top:2px">E:\BDMV\PLAYLIST</div></div>
<div class="row" style="top:463px"><div class="t" style="left:-6px;top:2px;width:9px;overflow:hidden;direction:rtl;color:#000">S</div><svg class="a" style="left:11px;top:2px" width="17" height="18" viewBox="0 0 17 18" ><path d="M1.5 0 v18 M15.5 0 v18 M0 1.5 h17 M0 16.5 h17" stroke="#c2d3f0" stroke-width="1"/><text x="8.5" y="12.35" transform="scale(1 1.31)" text-anchor="middle" font-family="Liberation Serif, serif" font-weight="bold" font-size="18" fill="url(#gT)" stroke="url(#gT)" stroke-width=".9" stroke-linejoin="round">T</text></svg><div class="t" style="left:36px;top:2px">字幕</div><svg class="a" style="left:147.5px;top:4px" width="17" height="14" viewBox="0 0 17 14" ><path d="M0.5 7.3 L2.9 4.6 L6.8 8.1 L14.2 0.6 L16.7 3.2 L7 13.3 Z" fill="url(#gGreen)" stroke="#2f8a2c" stroke-width=".8" stroke-linejoin="round"/><path d="M7.2 10.6 L14.4 2.6" stroke="#b4e6ac" stroke-width="1.3" stroke-linecap="round" opacity=".75"/></svg><div class="t" style="left:172px;top:2px">是</div><div class="t" style="left:271px;top:2px"><span style="font-size:16px;letter-spacing:-0.55px">zh</span></div><div class="t" style="left:396px;top:2px">原盘简中</div><div class="t" style="left:591px;width:74px;text-align:right;top:2px;font-size:16px;letter-spacing:-.3px">16</div><svg class="a" style="left:672.5px;top:4px" width="17" height="14" viewBox="0 0 17 14" ><path d="M0.5 7.3 L2.9 4.6 L6.8 8.1 L14.2 0.6 L16.7 3.2 L7 13.3 Z" fill="url(#gGreen)" stroke="#2f8a2c" stroke-width=".8" stroke-linejoin="round"/><path d="M7.2 10.6 L14.4 2.6" stroke="#b4e6ac" stroke-width="1.3" stroke-linecap="round" opacity=".75"/></svg><div class="t" style="left:697px;top:2px">是</div><svg class="a" style="left:796.7px;top:2px" width="18" height="19" viewBox="0 0 18 19" ><ellipse cx="9" cy="17.8" rx="6.5" ry="1" fill="#000" opacity=".13"/><circle cx="9.05" cy="8.85" r="7.1" fill="none" stroke="url(#gRed)" stroke-width="2.6"/><path d="M4.3 4.1 L13.8 13.6" stroke="url(#gRed)" stroke-width="2.5"/></svg><div class="t" style="left:822px;top:2px">否</div><div class="t" style="left:1196px;top:2px"><span style="font-size:16px;letter-spacing:0.08px">00001.mpls</span></div><div class="t" style="left:1321px;top:2px">E:\BDMV\PLAYLIST</div></div>
<div class="row" style="top:485px"><div class="t" style="left:-6px;top:2px;width:9px;overflow:hidden;direction:rtl;color:#000">S</div><svg class="a" style="left:11px;top:2px" width="17" height="18" viewBox="0 0 17 18" ><path d="M1.5 0 v18 M15.5 0 v18 M0 1.5 h17 M0 16.5 h17" stroke="#c2d3f0" stroke-width="1"/><text x="8.5" y="12.35" transform="scale(1 1.31)" text-anchor="middle" font-family="Liberation Serif, serif" font-weight="bold" font-size="18" fill="url(#gT)" stroke="url(#gT)" stroke-width=".9" stroke-linejoin="round">T</text></svg><div class="t" style="left:36px;top:2px">字幕</div><svg class="a" style="left:147.5px;top:4px" width="17" height="14" viewBox="0 0 17 14" ><path d="M0.5 7.3 L2.9 4.6 L6.8 8.1 L14.2 0.6 L16.7 3.2 L7 13.3 Z" fill="url(#gGreen)" stroke="#2f8a2c" stroke-width=".8" stroke-linejoin="round"/><path d="M7.2 10.6 L14.4 2.6" stroke="#b4e6ac" stroke-width="1.3" stroke-linecap="round" opacity=".75"/></svg><div class="t" style="left:172px;top:2px">是</div><div class="t" style="left:271px;top:2px"><span style="font-size:16px;letter-spacing:-0.55px">zh</span></div><div class="t" style="left:396px;top:2px">原盘繁中</div><div class="t" style="left:591px;width:74px;text-align:right;top:2px;font-size:16px;letter-spacing:-.3px">17</div><svg class="a" style="left:672.5px;top:4px" width="17" height="14" viewBox="0 0 17 14" ><path d="M0.5 7.3 L2.9 4.6 L6.8 8.1 L14.2 0.6 L16.7 3.2 L7 13.3 Z" fill="url(#gGreen)" stroke="#2f8a2c" stroke-width=".8" stroke-linejoin="round"/><path d="M7.2 10.6 L14.4 2.6" stroke="#b4e6ac" stroke-width="1.3" stroke-linecap="round" opacity=".75"/></svg><div class="t" style="left:697px;top:2px">是</div><svg class="a" style="left:796.7px;top:2px" width="18" height="19" viewBox="0 0 18 19" ><ellipse cx="9" cy="17.8" rx="6.5" ry="1" fill="#000" opacity=".13"/><circle cx="9.05" cy="8.85" r="7.1" fill="none" stroke="url(#gRed)" stroke-width="2.6"/><path d="M4.3 4.1 L13.8 13.6" stroke="url(#gRed)" stroke-width="2.5"/></svg><div class="t" style="left:822px;top:2px">否</div><div class="t" style="left:1196px;top:2px"><span style="font-size:16px;letter-spacing:0.08px">00001.mpls</span></div><div class="t" style="left:1321px;top:2px">E:\BDMV\PLAYLIST</div></div>
<div class="row" style="top:507px"><div class="t" style="left:-6px;top:2px;width:9px;overflow:hidden;direction:rtl;color:#000">S</div><svg class="a" style="left:11px;top:2px" width="17" height="18" viewBox="0 0 17 18" ><path d="M1.5 0 v18 M15.5 0 v18 M0 1.5 h17 M0 16.5 h17" stroke="#c2d3f0" stroke-width="1"/><text x="8.5" y="12.35" transform="scale(1 1.31)" text-anchor="middle" font-family="Liberation Serif, serif" font-weight="bold" font-size="18" fill="url(#gT)" stroke="url(#gT)" stroke-width=".9" stroke-linejoin="round">T</text></svg><div class="t" style="left:36px;top:2px">字幕</div><svg class="a" style="left:147.5px;top:4px" width="17" height="14" viewBox="0 0 17 14" ><path d="M0.5 7.3 L2.9 4.6 L6.8 8.1 L14.2 0.6 L16.7 3.2 L7 13.3 Z" fill="url(#gGreen)" stroke="#2f8a2c" stroke-width=".8" stroke-linejoin="round"/><path d="M7.2 10.6 L14.4 2.6" stroke="#b4e6ac" stroke-width="1.3" stroke-linecap="round" opacity=".75"/></svg><div class="t" style="left:172px;top:2px">是</div><div class="t" style="left:271px;top:2px"><span style="font-size:16px;letter-spacing:-0.12px">ja</span></div><div class="t" style="left:396px;top:2px">日语带解说</div><div class="t" style="left:591px;width:74px;text-align:right;top:2px;font-size:16px;letter-spacing:-.3px">18</div><svg class="a" style="left:672.5px;top:4px" width="17" height="14" viewBox="0 0 17 14" ><path d="M0.5 7.3 L2.9 4.6 L6.8 8.1 L14.2 0.6 L16.7 3.2 L7 13.3 Z" fill="url(#gGreen)" stroke="#2f8a2c" stroke-width=".8" stroke-linejoin="round"/><path d="M7.2 10.6 L14.4 2.6" stroke="#b4e6ac" stroke-width="1.3" stroke-linecap="round" opacity=".75"/></svg><div class="t" style="left:697px;top:2px">是</div><svg class="a" style="left:796.7px;top:2px" width="18" height="19" viewBox="0 0 18 19" ><ellipse cx="9" cy="17.8" rx="6.5" ry="1" fill="#000" opacity=".13"/><circle cx="9.05" cy="8.85" r="7.1" fill="none" stroke="url(#gRed)" stroke-width="2.6"/><path d="M4.3 4.1 L13.8 13.6" stroke="url(#gRed)" stroke-width="2.5"/></svg><div class="t" style="left:822px;top:2px">否</div><div class="t" style="left:1196px;top:2px"><span style="font-size:16px;letter-spacing:0.08px">00001.mpls</span></div><div class="t" style="left:1321px;top:2px">E:\BDMV\PLAYLIST</div></div>
</div>
<div class="hdr" style="left:109px;top:301px;width:1382px;height:23px;overflow:hidden"><div class="hsep" style="left:6px"></div><div class="hsep" style="left:142px"></div><div class="hsep" style="left:267px"></div><div class="hsep" style="left:392px"></div><div class="hsep" style="left:542px"></div><div class="hsep" style="left:667px"></div><div class="hsep" style="left:792px"></div><div class="hsep" style="left:917px"></div><div class="hsep" style="left:1042px"></div><div class="hsep" style="left:1192px"></div><div class="hsep" style="left:1317px"></div></div>
<div class="t" style="left:118px;top:302px">类型</div>
<div class="t" style="left:254px;top:302px">复制项目</div>
<div class="t" style="left:379px;top:302px">语言</div>
<div class="t" style="left:504px;top:302px">名称</div>
<div class="t" style="left:779px;top:302px">默认轨道</div>
<div class="t" style="left:904px;top:302px">强制显示</div>
<div class="t" style="left:1029px;top:302px">字符集</div>
<div class="t" style="left:1154px;top:302px">属性</div>
<div class="t" style="left:1304px;top:302px">输入文件</div>
<div class="t" style="left:1429px;top:302px;width:61px;overflow:hidden">输入文件</div>
<div class="t" style="left:700px;top:302px;width:74px;text-align:right">ID</div>
<div class="a" style="left:1490px;top:301px;width:17px;height:538px;background:#e5e5e5;border-left:1px solid #c6c6c6"></div>
<div class="a" style="left:1491px;top:301px;width:16px;height:17px;background:#f4f4f4"></div>
<div class="a" style="left:1490px;top:820px;width:17px;height:18px;background:#f4f4f4;border:1px solid #d4d4d4"></div>
<div class="a" style="left:1490px;top:318px;width:17px;height:414px;background:linear-gradient(90deg,#ffffff,#f6f6f6 60%,#ececec);border:1px solid #c6c6c6;border-right:none"></div>
<svg class="a" style="left:1491px;top:301px" width="16" height="538"><path d="M3.5 11.5 L8 6 L12.5 11.5 Z" fill="#555"/><path d="M3.5 526 L8 531.5 L12.5 526 Z" fill="#555"/></svg>
<div class="a" style="left:109px;top:839px;width:1398px;height:16px;background:#f0f0f0;border-top:2px solid #e3e3e3"></div>
<div class="a" style="left:1244px;top:839px;width:229px;height:16px;background:#e5e5e5"></div>
<div class="a" style="left:230px;top:839px;width:1015px;height:16px;background:linear-gradient(#fdfdfd,#f4f4f4 50%,#e9e9e9);border:1px solid #d0d0d0"></div>
<div class="a" style="left:127px;top:839px;width:1px;height:16px;background:#d0d0d0"></div><div class="a" style="left:1473px;top:839px;width:1px;height:16px;background:#d0d0d0"></div><div class="a" style="left:1490px;top:839px;width:1px;height:16px;background:#d0d0d0"></div>
<svg class="a" style="left:109px;top:839px" width="1400" height="15"><path d="M12 3 L6.5 7.500000000000001 L12 12 Z" fill="#444"/><path d="M1369.5 3 L1375 7.5 L1369.5 12 Z" fill="#444"/></svg>
<div class="a" style="left:1513px;top:185px;width:370px;height:671px;background:#fff;border:1px solid #000;overflow:hidden" id="props">
<div class="a" style="left:12px;top:33px;width:328px;height:463px;border:1px solid #e2e2e2;border-radius:2px;background:#fafafa"></div><div class="a" style="left:12px;top:524px;width:328px;height:200px;border:1px solid #e2e2e2;border-radius:2px;background:#fafafa"></div><svg class="a" style="left:13px;top:16px" width="12" height="11"><path d="M.7 .7 H11.3 L6 10 Z" fill="#fff" stroke="#a8a8a8" stroke-width="1"/></svg><div class="t" style="left:33px;top:11px">通用选项</div><svg class="a" style="left:13px;top:508px" width="12" height="11"><path d="M.7 .7 H11.3 L6 10 Z" fill="#fff" stroke="#a8a8a8" stroke-width="1"/></svg><div class="t" style="left:33px;top:503px">时间戳和默认帧时长</div><div class="t" style="left:25px;top:50px;color:#000">复制此项目(<u>Y</u>):</div><div class="combo" style="left:142px;top:47px;width:184px"><div class="t" style="left:3px;top:3px">是</div><svg class="a" style="right:8.5px;top:10px" width="9.6" height="5.2"><path d="M0 0 H9.6 L4.8 5.2 Z" fill="#3c3c3c"/></svg></div><div class="t" style="left:25px;top:84px;color:#000">轨道名称(<u>K</u>):</div><div class="t" style="left:25px;top:118px;color:#000">语言(<u>L</u>):</div><div class="t" style="left:25px;top:152px;color:#000">｢默认轨｣标记:</div><div class="combo" style="left:142px;top:149px;width:184px"><div class="t" style="left:3px;top:3px">是</div><svg class="a" style="right:8.5px;top:10px" width="9.6" height="5.2"><path d="M0 0 H9.6 L4.8 5.2 Z" fill="#3c3c3c"/></svg></div><div class="t" style="left:25px;top:186px;color:#000">｢轨道启用｣标记:</div><div class="combo" style="left:142px;top:183px;width:184px"><div class="t" style="left:3px;top:3px">是</div><svg class="a" style="right:8.5px;top:10px" width="9.6" height="5.2"><path d="M0 0 H9.6 L4.8 5.2 Z" fill="#3c3c3c"/></svg></div><div class="t" style="left:25px;top:220px;color:#000">｢强制显示｣标记:</div><div class="combo" style="left:142px;top:217px;width:184px"><div class="t" style="left:3px;top:3px">否</div><svg class="a" style="right:8.5px;top:10px" width="9.6" height="5.2"><path d="M0 0 H9.6 L4.8 5.2 Z" fill="#3c3c3c"/></svg></div><div class="t" style="left:25px;top:254px;color:#000">｢听觉障碍｣标记:</div><div class="combo" style="left:142px;top:251px;width:184px"><div class="t" style="left:3px;top:3px">否</div><svg class="a" style="right:8.5px;top:10px" width="9.6" height="5.2"><path d="M0 0 H9.6 L4.8 5.2 Z" fill="#3c3c3c"/></svg></div><div class="t" style="left:25px;top:288px;color:#000">｢视觉障碍｣标记:</div><div class="combo" style="left:142px;top:285px;width:184px"><div class="t" style="left:3px;top:3px">否</div><svg class="a" style="right:8.5px;top:10px" width="9.6" height="5.2"><path d="M0 0 H9.6 L4.8 5.2 Z" fill="#3c3c3c"/></svg></div><div class="t" style="left:25px;top:322px;color:#8a8a8a">｢文字描述｣标记:</div><div class="combo dis" style="left:142px;top:319px;width:184px"><div class="t" style="left:3px;top:3px">否</div><svg class="a" style="right:8.5px;top:10px" width="9.6" height="5.2"><path d="M0 0 H9.6 L4.8 5.2 Z" fill="#a0a0a0"/></svg></div><div class="t" style="left:25px;top:356px;color:#000">｢原始语言｣标记:</div><div class="combo" style="left:142px;top:353px;width:184px"><div class="t" style="left:3px;top:3px">否</div><svg class="a" style="right:8.5px;top:10px" width="9.6" height="5.2"><path d="M0 0 H9.6 L4.8 5.2 Z" fill="#3c3c3c"/></svg></div><div class="t" style="left:25px;top:390px;color:#000">｢评论轨｣标记:</div><div class="combo" style="left:142px;top:387px;width:184px"><div class="t" style="left:3px;top:3px">否</div><svg class="a" style="right:8.5px;top:10px" width="9.6" height="5.2"><path d="M0 0 H9.6 L4.8 5.2 Z" fill="#3c3c3c"/></svg></div><div class="t" style="left:25px;top:424px;color:#000">压缩方式:</div><div class="combo" style="left:142px;top:421px;width:184px"><div class="t" style="left:3px;top:3px">自动决定</div><svg class="a" style="right:8.5px;top:10px" width="9.6" height="5.2"><path d="M0 0 H9.6 L4.8 5.2 Z" fill="#3c3c3c"/></svg></div><div class="t" style="left:25px;top:458px;color:#000">标签:</div><div class="combo" style="left:142px;top:81px;width:184px;background:#fff"><div class="a" style="right:0;top:0;width:25px;height:25px;background:linear-gradient(#fdfdfd,#f0f0f0 50%,#e2e2e2);border-radius:0 3px 3px 0"></div><div class="t" style="left:3px;top:3px">日语5.1</div><svg class="a" style="left:133px;top:4px" width="14" height="14"><path d="M.5 .5 L13.5 13.5 M13.5 .5 L.5 13.5" stroke="#111" stroke-width="1.3"/></svg><svg class="a" style="right:8.5px;top:10px" width="9.6" height="5.2"><path d="M0 0 H9.6 L4.8 5.2 Z" fill="#4d4d4d"/></svg></div><div class="t" style="left:142px;top:118px;color:#0000ee"><u><span style="font-size:16px;letter-spacing:-0.19px">Japanese (ja)</span></u></div><div class="btn" style="left:293px;top:115px;width:33px;height:27px"><svg class="a" style="left:6px;top:4px" width="20" height="18" viewBox="0 0 20 18" ><rect x=".5" y="7.5" width="18" height="10" fill="#e9effb" stroke="#b9b9b9" stroke-width=".9"/><path d="M5 14.8 l.9 -3.2 9.2 -10.4 2.3 2 -9.2 10.4 z" fill="#eab308" stroke="#7a5a0a" stroke-width=".7" stroke-linejoin="round"/><path d="M7 11.700000000000001 l8.8 -9.9" stroke="#f8dc6a" stroke-width=".8"/><path d="M15.1 1.2 l.9 -1 2.3 2 -.9 1 z" fill="#3a3a3a"/><path d="M5 14.8 l.45 -1.5 1.1 1 z" fill="#222"/></svg></div><div class="edit" style="left:142px;top:455px;width:145px;height:27px"></div><div class="btn" style="left:293px;top:455px;width:33px;height:27px"><svg class="a" style="left:5px;top:1px" width="22" height="20" viewBox="0 0 22 20" ><path d="M3.2 1.6 h10 l4 4 v8 h-14 z" fill="url(#gPage)" stroke="#c4c4c4" stroke-width=".7"/><path d="M12.6 3.8 v3.6 h3.6" fill="none" stroke="#b9b9b9" stroke-width=".8"/><path d="M10.6 .8 h3 q5.6 1.2 7 6.4 q.2 1.4 -.6 2.2 l-2.2 .4 q-1.2 -5.4 -7.2 -9 z" fill="#0c0c0c"/><rect x=".9" y="2.2" width="2.5" height="17.4" fill="url(#gBar)"/><path d="M.9 12.4 h8 l.8 -1.2 h10.8 v8.4 h-19.6 z" fill="url(#gBlueTray)"/><path d="M.9 15.9 h19.6" stroke="#3b70b3" stroke-width=".9"/><path d="M.9 19.3 h19.6" stroke="#3b70b3" stroke-width=".6"/></svg></div><div class="t" style="left:25px;top:542px">延迟 (毫秒):</div><div class="edit" style="left:155px;top:538px;width:171px;height:27px"></div><div class="t" style="left:25px;top:575px">伸展比率:</div><div class="edit" style="left:155px;top:571px;width:171px;height:27px"></div><div class="t" style="left:25px;top:608px;color:#8a8a8a">默认帧时长或帧率:</div><div class="combo dis" style="left:155px;top:604px;width:171px"><div class="a" style="right:0;top:0;width:25px;height:25px;background:#f7f7f7;border-radius:0 3px 3px 0"></div><svg class="a" style="right:8.5px;top:10px" width="9.6" height="5.2"><path d="M0 0 H9.6 L4.8 5.2 Z" fill="#a0a0a0"/></svg></div><div class="t" style="left:25px;top:641px">时间戳文件:</div><div class="edit" style="left:155px;top:637px;width:132px;height:27px"></div><div class="btn" style="left:293px;top:637px;width:33px;height:27px"><svg class="a" style="left:5px;top:1px" width="22" height="20" viewBox="0 0 22 20" ><path d="M3.2 1.6 h10 l4 4 v8 h-14 z" fill="url(#gPage)" stroke="#c4c4c4" stroke-width=".7"/><path d="M12.6 3.8 v3.6 h3.6" fill="none" stroke="#b9b9b9" stroke-width=".8"/><path d="M10.6 .8 h3 q5.6 1.2 7 6.4 q.2 1.4 -.6 2.2 l-2.2 .4 q-1.2 -5.4 -7.2 -9 z" fill="#0c0c0c"/><rect x=".9" y="2.2" width="2.5" height="17.4" fill="url(#gBar)"/><path d="M.9 12.4 h8 l.8 -1.2 h10.8 v8.4 h-19.6 z" fill="url(#gBlueTray)"/><path d="M.9 15.9 h19.6" stroke="#3b70b3" stroke-width=".9"/><path d="M.9 19.3 h19.6" stroke="#3b70b3" stroke-width=".6"/></svg></div><div class="a" style="left:351px;top:0;width:17px;height:669px;background:#e5e5e5;border-left:1px solid #c6c6c6"></div><div class="a" style="left:351px;top:0;width:17px;height:17px;background:#f4f4f4;border-left:1px solid #d4d4d4"></div><div class="a" style="left:351px;top:651px;width:17px;height:18px;background:#f4f4f4;border:1px solid #d4d4d4;border-right:none"></div><div class="a" style="left:351px;top:17px;width:17px;height:206px;background:linear-gradient(90deg,#ffffff,#f6f6f6 60%,#ececec);border:1px solid #c6c6c6;border-right:none"></div><svg class="a" style="left:351px;top:0" width="17" height="668"><path d="M4 11.5 L8.5 6 L13 11.5 Z" fill="#555"/><path d="M4 657 L8.5 662.5 L13 657 Z" fill="#555"/></svg>
</div>
<div class="a" style="left:1509px;top:500px;width:1px;height:18px;background:repeating-linear-gradient(0deg,#b0b0b0 0 1px,transparent 1px 3px)"></div>
<div class="t" style="left:95px;top:876px">输出文件</div>
<div class="a" style="left:95px;top:897px;width:1801px;height:45px;border:1px solid #e2e2e2;border-radius:2px;background:#fafafa"></div>
<div class="t" style="left:104px;top:910px">输出文件:</div>
<div class="edit" style="left:174px;top:906px;width:1635px;height:27px"><div class="t" style="left:3px;top:3px;letter-spacing:.2px">F:\光盘复制\你想活出怎样的人生.mkv</div><svg class="a" style="right:11px;top:5px" width="14" height="14"><path d="M.5 .5 L13.5 13.5 M13.5 .5 L.5 13.5" stroke="#111" stroke-width="1.3"/></svg></div>
<div class="btn" style="left:1815px;top:906px;width:33px;height:27px"><svg class="a" style="left:5px;top:1px" width="22" height="20" viewBox="0 0 22 20" ><path d="M3.2 1.6 h10 l4 4 v8 h-14 z" fill="url(#gPage)" stroke="#c4c4c4" stroke-width=".7"/><path d="M12.6 3.8 v3.6 h3.6" fill="none" stroke="#b9b9b9" stroke-width=".8"/><path d="M10.6 .8 h3 q5.6 1.2 7 6.4 q.2 1.4 -.6 2.2 l-2.2 .4 q-1.2 -5.4 -7.2 -9 z" fill="#0c0c0c"/><rect x=".9" y="2.2" width="2.5" height="17.4" fill="url(#gBar)"/><path d="M.9 12.4 h8 l.8 -1.2 h10.8 v8.4 h-19.6 z" fill="url(#gBlueTray)"/><path d="M.9 15.9 h19.6" stroke="#3b70b3" stroke-width=".9"/><path d="M.9 19.3 h19.6" stroke="#3b70b3" stroke-width=".6"/></svg></div>
<div class="btn" style="left:1854px;top:906px;width:33px;height:27px"><svg class="a" style="left:5px;top:2px" width="22" height="20" viewBox="0 0 22 20" ><path d="M0 3.2 q0 -1.2 1.2 -1.2 h5.6 l1.8 1.6 h10 q1.2 0 1.2 1.2 v13 q0 1.2 -1.2 1.2 h-17.4 q-1.2 0 -1.2 -1.2 z" fill="#4a7fc6"/><path d="M0 6.6 h19.8 v11.2 q0 1.2 -1.2 1.2 h-17.4 q-1.2 0 -1.2 -1.2 z" fill="#7aa8e0"/><path d="M0 16.2 h19.8" stroke="#4a7fc6" stroke-width=".8"/><path d="M12.4 5.800000000000001 l2.4 4.8 5.2 .7 -3.8 3.600000000000001 .9 5.2 -4.7 -2.500000000000001 -4.7 2.5 .9 -5.2 -3.8 -3.6 5.2 -.7 z" fill="url(#gStar)" stroke="#e0900f" stroke-width=".9" stroke-linejoin="round"/></svg></div>
<div class="btn" style="left:748px;top:948px;width:151px;height:27px"><svg class="a" style="left:4px;top:4px" width="17" height="17" viewBox="0 0 17 17" ><path d="M6.2 1 h4.6 v5.2 h5.2 v4.6 h-5.2 v5.2 h-4.600000000000001 v-5.2 h-5.2 v-4.6 h5.2 z" fill="url(#gGreen)" stroke="#2f8a2c" stroke-width=".8" stroke-linejoin="round"/></svg><div class="t" style="left:24px;top:3px">添加输入文件(<u>A</u>)</div></div>
<div class="btn" style="left:900px;top:948px;width:14px;height:27px"><svg class="a" style="left:1px;top:9px" width="10" height="6"><path d="M0 0 H9.6 L4.8 5.2 Z" fill="#4d4d4d"/></svg></div>
<div class="btn" style="left:920px;top:948px;width:120px;height:27px"><svg class="a" style="left:2px;top:3px" width="20" height="20" viewBox="0 0 19 19" ><circle cx="9.5" cy="9.5" r="8.2" fill="#fafafa" stroke="#3b3b3b" stroke-width="1.5"/><path d="M7.2 5.3 L13.6 9.5 L7.2 13.7 Z" fill="#2b2b2b"/></svg><div class="t" style="left:23px;top:3px">开始混流(<u>R</u>)</div></div>
<div class="btn" style="left:1041px;top:948px;width:14px;height:27px"><svg class="a" style="left:1px;top:9px" width="10" height="6"><path d="M0 0 H9.6 L4.8 5.2 Z" fill="#4d4d4d"/></svg></div>
<div class="btn" style="left:1061px;top:948px;width:167px;height:27px"><svg class="a" style="left:3px;top:6px" width="20" height="14" viewBox="0 0 20 14" ><circle cx="13.6" cy="7" r="6" fill="#7ec0ee" stroke="#2e77c4" stroke-width=".8"/><circle cx="13" cy="7" r="3.2" fill="#dff0ff"/><circle cx="6.8" cy="7" r="6.3" fill="url(#gBall)" stroke="#0c3f90" stroke-width=".7"/><path d="M2.8 7 h6 m-2.400000000000001 -2.4 l2.6 2.4 -2.6 2.4" fill="none" stroke="#fff" stroke-width="1.5"/></svg><div class="t" style="left:24px;top:3px">添加到任务队列(<u>Q</u>)</div></div>
<div class="btn" style="left:1229px;top:948px;width:14px;height:27px"><svg class="a" style="left:1px;top:9px" width="10" height="6"><path d="M0 0 H9.6 L4.8 5.2 Z" fill="#4d4d4d"/></svg></div>
<div class="a" style="left:1104px;top:992px;width:1px;height:25px;background:#bdbdbd"></div>
<div class="a" style="left:1453px;top:992px;width:1px;height:25px;background:#bdbdbd"></div>
<div class="a" style="left:1634px;top:992px;width:1px;height:25px;background:#bdbdbd"></div>
<div class="t" style="left:1113px;top:995px;letter-spacing:.12px">待执行的任务: 0 个自动，0 个手动，0 个正在运行</div>
<svg class="a" style="left:1462px;top:996px" width="16" height="15"><path d="M8 .8 L15.3 14.3 H.7 Z" fill="#8d8d8d" stroke="#7a7a7a" stroke-width=".8" stroke-linejoin="round"/><path d="M8 5 v5" stroke="#e8e8e8" stroke-width="1.6"/><circle cx="8" cy="12" r=".9" fill="#e8e8e8"/></svg>
<div class="t" style="left:1484px;top:995px">2 个警告</div>
<svg class="a" style="left:1549px;top:997px" width="14" height="14"><rect x=".5" y=".5" width="13" height="13" rx="1" fill="#6d6d6d" stroke="#4f4f4f"/><path d="M4 4 l6 6 M10 4 l-6 6" stroke="#fff" stroke-width="2"/></svg>
<div class="t" style="left:1570px;top:995px">0 个错误</div>
<div class="t" style="left:1643px;top:995px">进度:</div>
<div class="a" style="left:1683px;top:996px;width:60px;height:21px;background:#fff;border:1px solid #bcbcbc;border-radius:3px"></div>
<div class="a" style="left:1712px;top:985px;width:175px;height:35px;background:#fff;border-left:1px solid #e6e6e6;border-top:1px solid #e6e6e6"></div>
<svg class="a" style="left:1712px;top:985px" width="175" height="35" viewBox="0 0 175 35">
<circle cx="19" cy="17" r="12" fill="none" stroke="#4a7cf7" stroke-width="2.9"/><path d="M8.5 24.5 l-2.2 3.6 5.2 -1.2 z" fill="#4a7cf7"/>
<text x="19" y="20.3" text-anchor="middle" font-family="Liberation Sans, sans-serif" font-weight="bold" font-size="8.8" fill="#4a7cf7" stroke="#4a7cf7" stroke-width=".5">iFLY</text>
<text x="58" y="25.6" text-anchor="middle" font-family="Noto Sans CJK SC, sans-serif" font-weight="500" font-size="21" fill="#4a7cf7" stroke="#4a7cf7" stroke-width=".45">中</text>
<circle cx="87" cy="12.7" r="2.8" fill="none" stroke="#4a7cf7" stroke-width="2.3"/><path d="M92.8 20 a3 3 0 1 1 5.6 1.5 q-1.2 4 -5.8 5.4 q2.8 -2 2.6 -4.200000000000001 q-2.2 -.5 -2.4 -2.7 z" fill="#4a7cf7"/>
<rect x="119.7" y="8" width="8.6" height="14.5" rx="4.3" fill="#4a7cf7"/><path d="M117.4 16.5 q0 7.4 6.6 7.4 q6.6 0 6.6 -7.4 M124 24 v4.2" fill="none" stroke="#4a7cf7" stroke-width="2"/>
<rect x="148.5" y="9" width="7.6" height="8" fill="#4a7cf7"/><rect x="148.5" y="19.2" width="7.6" height="8" fill="#4a7cf7"/><rect x="158.4" y="19.2" width="7.6" height="8" fill="#4a7cf7"/><path d="M162.2 7.6 l4.6 4.6 -4.6 4.6 -4.6 -4.6 z" fill="#4a7cf7"/>
</svg>
<div class="a" style="left:0;top:1020px;width:1920px;height:3px;background:#1e2515"></div>
<div class="a" style="left:1906.5px;top:862px;width:86px;height:86px;border-radius:50%;background:#56cd2e;box-shadow:-1px 2px 6px rgba(0,0,0,.28)"></div>
</body></html>
